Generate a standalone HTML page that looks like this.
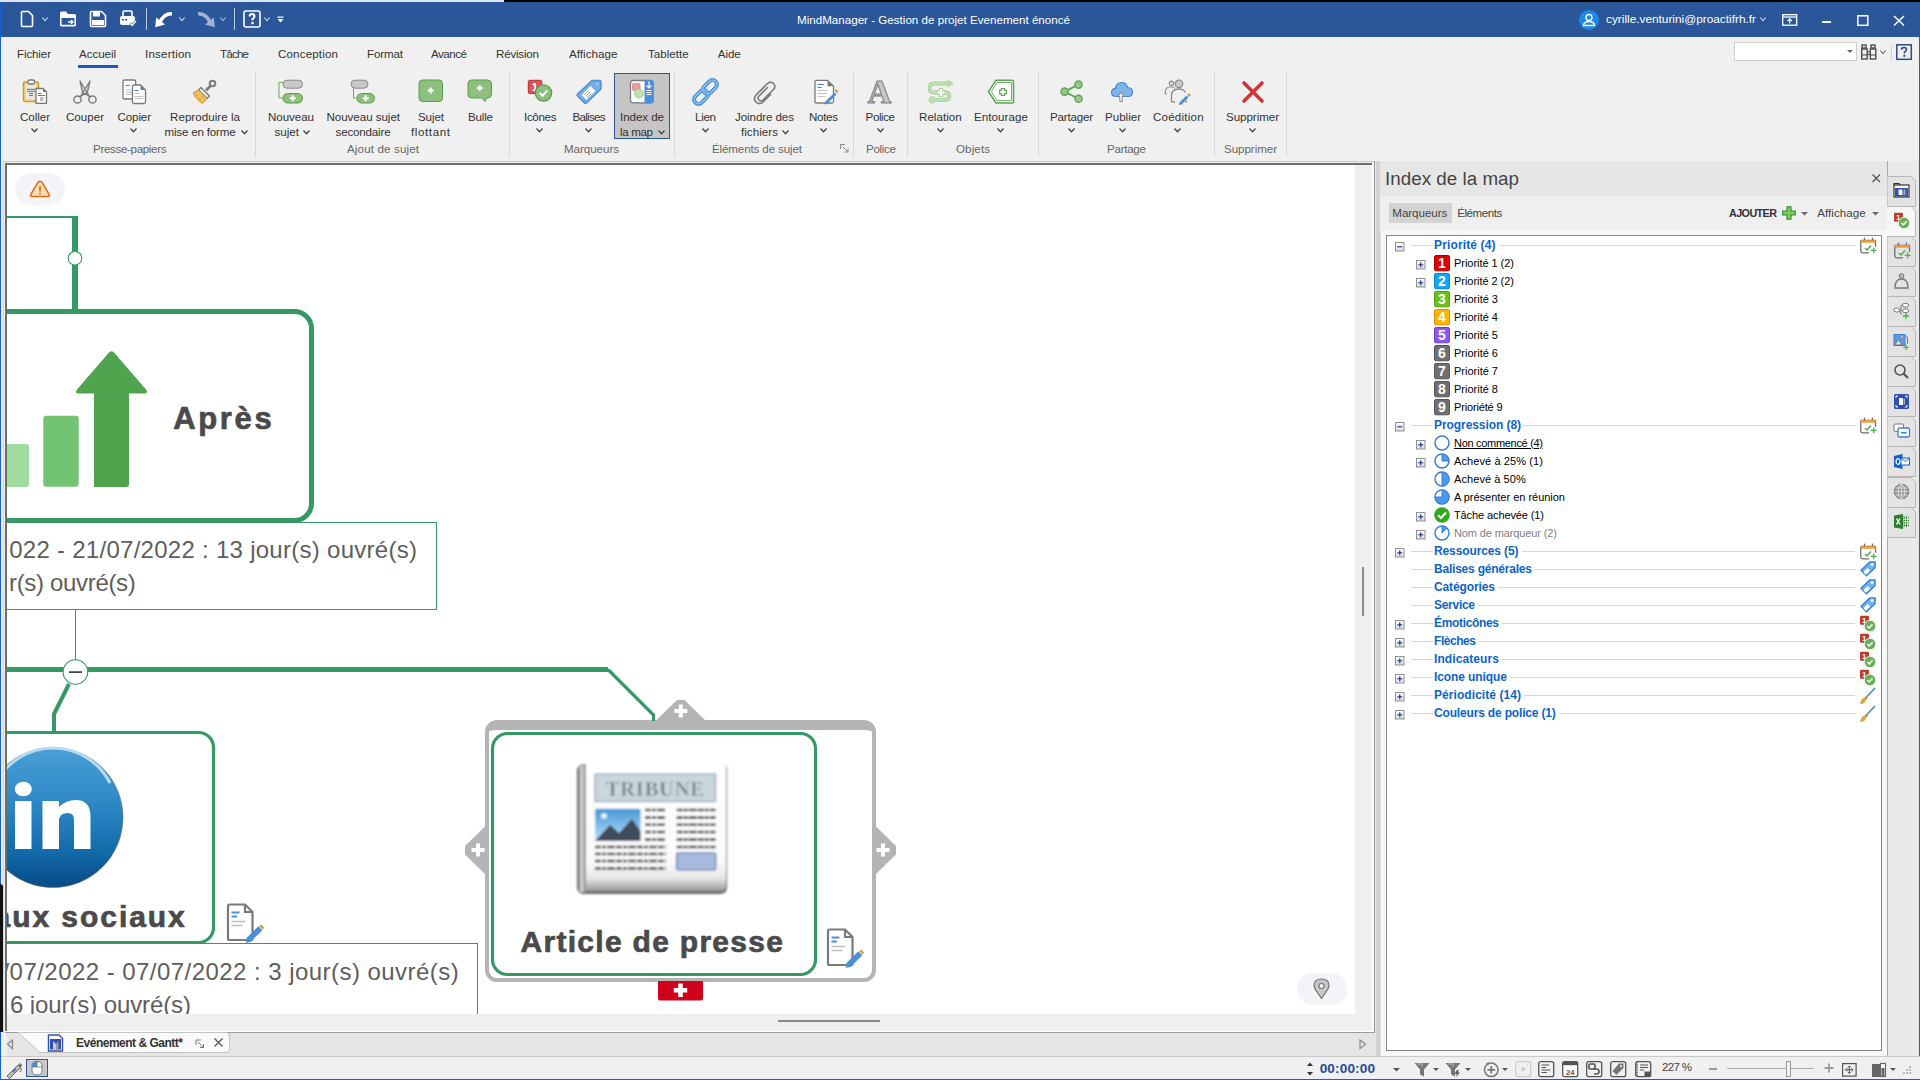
<!DOCTYPE html>
<html><head><meta charset="utf-8"><style>*{margin:0;padding:0;box-sizing:border-box}
html,body{width:1920px;height:1080px;overflow:hidden;background:#f0f0f0;font-family:"Liberation Sans",sans-serif;font-size:12px;color:#444;position:relative}
.a{position:absolute}
svg{position:absolute;overflow:visible}
.t{position:absolute;white-space:nowrap}
</style></head><body>
<div class="a" style="left:0px;top:0px;width:1920px;height:2px;background:#000;"></div>
<div class="a" style="left:0px;top:0px;width:504px;height:2px;background:#dbe5f5;"></div>
<div class="a" style="left:0px;top:2px;width:1920px;height:35px;background:#2b579a;"></div>
<div class="a" style="left:0px;top:2px;width:1px;height:1078px;background:#1a5fd0;"></div>
<div class="a" style="left:0px;top:884px;width:3px;height:148px;background:#111;border-radius:0 3px 0 0"></div>
<div class="a" style="left:1919px;top:37px;width:1px;height:1043px;background:#1a5fd0;"></div>
<svg style="left:20px;top:10px;" width="14" height="18" viewBox="0 0 14 18"><path d="M1.5 2.5 Q1.5 1.5 2.5 1.5 H8.5 L12.5 5.5 V15.5 Q12.5 16.5 11.5 16.5 H2.5 Q1.5 16.5 1.5 15.5 Z" fill="none" stroke="#fff" stroke-width="1.6"/></svg>
<svg style="left:42px;top:17px;" width="6" height="4" viewBox="0 0 6 4"><path d="M0.5 0.5 L3.0 3.8 L5.5 0.5" fill="none" stroke="#fff" stroke-width="1"/></svg>
<svg style="left:59px;top:10px;" width="18" height="18" viewBox="0 0 18 18"><path d="M1 3 Q1 1.5 2.5 1.5 H7 L9 4 H15.5 Q17 4 17 5.5 V15 Q17 16.5 15.5 16.5 H2.5 Q1 16.5 1 15 Z" fill="#fff"/><path d="M2.6 8 H15.4 V14.8 H2.6 Z" fill="#2b579a"/><path d="M9 12 H14 M12 10 L14 12 L12 14" stroke="#fff" stroke-width="1.4" fill="none"/></svg>
<svg style="left:89px;top:10px;" width="18" height="18" viewBox="0 0 18 18"><path d="M1.5 2.5 Q1.5 1.5 2.5 1.5 H12.5 L16.5 5.5 V15.5 Q16.5 16.5 15.5 16.5 H2.5 Q1.5 16.5 1.5 15.5 Z" fill="none" stroke="#fff" stroke-width="1.6"/><rect x="4" y="1.5" width="7" height="5" fill="#fff"/><rect x="3" y="10" width="12" height="5" fill="#fff"/></svg>
<svg style="left:119px;top:10px;" width="18" height="18" viewBox="0 0 18 18"><path d="M4 6 V2 Q4 1 5 1 H12 Q13 1 13 2 V6" fill="none" stroke="#fff" stroke-width="1.6"/><path d="M1 8 Q1 6 3 6 H14 Q16 6 16 8 V13 Q16 15 14 15 H3 Q1 15 1 13 Z" fill="#fff"/><rect x="3" y="9" width="2" height="1.5" fill="#2b579a"/><rect x="6" y="9" width="2" height="1.5" fill="#2b579a"/><path d="M11 13 L13 15.5 L17 11" stroke="#2b579a" stroke-width="2.6" fill="none"/><path d="M11 13 L13 15.5 L17 11" stroke="#fff" stroke-width="1.4" fill="none"/></svg>
<div class="a" style="left:146px;top:8px;width:1px;height:22px;background:#b9c7df;"></div>
<svg style="left:154px;top:11px;" width="20" height="17" viewBox="0 0 20 17"><path d="M18 2.8 Q9.5 2.5 6 11.5" fill="none" stroke="#fff" stroke-width="3.6"/><path d="M1.2 16.3 L2.2 6.5 L11 13.5 Z" fill="#fff"/></svg>
<svg style="left:179px;top:17px;" width="6" height="4" viewBox="0 0 6 4"><path d="M0.5 0.5 L3.0 3.8 L5.5 0.5" fill="none" stroke="#fff" stroke-width="1"/></svg>
<svg style="left:196px;top:11px;" width="20" height="17" viewBox="0 0 20 17"><path d="M2 2.8 Q10.5 2.5 14 11.5" fill="none" stroke="#9fb3d4" stroke-width="3.6"/><path d="M18.8 16.3 L17.8 6.5 L9 13.5 Z" fill="#9fb3d4"/></svg>
<svg style="left:220px;top:17px;" width="6" height="4" viewBox="0 0 6 4"><path d="M0.5 0.5 L3.0 3.8 L5.5 0.5" fill="none" stroke="#c9d4e6" stroke-width="1"/></svg>
<div class="a" style="left:234px;top:8px;width:1px;height:22px;background:#b9c7df;"></div>
<svg style="left:243px;top:10px;" width="18" height="18" viewBox="0 0 18 18"><rect x="1" y="1" width="16" height="16" rx="2" fill="none" stroke="#fff" stroke-width="1.6"/><path d="M6.5 6.5 Q6.5 4 9 4 Q11.5 4 11.5 6.3 Q11.5 8 9.5 9 V10.5" fill="none" stroke="#fff" stroke-width="2"/><rect x="8.3" y="12" width="2.4" height="2.2" fill="#fff"/></svg>
<svg style="left:264px;top:17px;" width="6" height="4" viewBox="0 0 6 4"><path d="M0.5 0.5 L3.0 3.8 L5.5 0.5" fill="none" stroke="#fff" stroke-width="1"/></svg>
<svg style="left:277px;top:16px;" width="8" height="8" viewBox="0 0 8 8"><rect x="0.5" y="0.5" width="6" height="1.2" fill="#fff"/><path d="M0.5 3 H6.5 L3.5 6.5 Z" fill="#fff"/></svg>
<div class="t" style="letter-spacing:0.008px;left:797px;top:14.14px;line-height:1;font-size:11.6px;font-weight:normal;color:#fff;font-family:'Liberation Sans',sans-serif;">MindManager - Gestion de projet Evenement énoncé</div>
<svg style="left:1579px;top:10px;" width="20" height="20" viewBox="0 0 20 20"><circle cx="10" cy="10" r="10" fill="#1e88e5"/><circle cx="10" cy="7.5" r="3" fill="none" stroke="#fff" stroke-width="1.3"/><path d="M4.5 15.5 Q5 11.5 10 11.5 Q15 11.5 15.5 15.5 Z" fill="none" stroke="#fff" stroke-width="1.3"/></svg>
<div class="t" style="letter-spacing:0.011px;left:1606px;top:13.97px;line-height:1;font-size:11.8px;font-weight:normal;color:#fff;font-family:'Liberation Sans',sans-serif;">cyrille.venturini@proactifrh.fr</div>
<svg style="left:1760px;top:17px;" width="6" height="4" viewBox="0 0 6 4"><path d="M0.5 0.5 L3.0 3.8 L5.5 0.5" fill="none" stroke="#fff" stroke-width="1"/></svg>
<svg style="left:1782px;top:14px;" width="16" height="12" viewBox="0 0 16 12"><rect x="0.7" y="0.7" width="14" height="10.5" fill="none" stroke="#fff" stroke-width="1.3"/><path d="M0.7 3 H14.7" stroke="#fff" stroke-width="1.3"/><path d="M7.7 9.5 V5 M5.5 7 L7.7 4.8 L9.9 7" stroke="#fff" stroke-width="1.2" fill="none"/></svg>
<div class="a" style="left:1822px;top:21px;width:9px;height:2px;background:#fff;"></div>
<svg style="left:1857px;top:15px;" width="12" height="11" viewBox="0 0 12 11"><rect x="0.8" y="0.8" width="10" height="9.5" fill="none" stroke="#fff" stroke-width="1.5"/></svg>
<svg style="left:1893px;top:15px;" width="12" height="11" viewBox="0 0 12 11"><path d="M1 1 L11 10.5 M11 1 L1 10.5" stroke="#fff" stroke-width="1.5"/></svg>
<div class="t" style="letter-spacing:-0.133px;left:17px;top:48.14px;line-height:1;font-size:11.6px;font-weight:normal;color:#333;font-family:'Liberation Sans',sans-serif;">Fichier</div>
<div class="t" style="letter-spacing:-0.062px;left:79px;top:48.14px;line-height:1;font-size:11.6px;font-weight:normal;color:#333;font-family:'Liberation Sans',sans-serif;">Accueil</div>
<div class="t" style="letter-spacing:0.191px;left:145px;top:48.14px;line-height:1;font-size:11.6px;font-weight:normal;color:#333;font-family:'Liberation Sans',sans-serif;">Insertion</div>
<div class="t" style="letter-spacing:-0.809px;left:220px;top:48.14px;line-height:1;font-size:11.6px;font-weight:normal;color:#333;font-family:'Liberation Sans',sans-serif;">Tâche</div>
<div class="t" style="letter-spacing:0.149px;left:278px;top:48.14px;line-height:1;font-size:11.6px;font-weight:normal;color:#333;font-family:'Liberation Sans',sans-serif;">Conception</div>
<div class="t" style="letter-spacing:-0.144px;left:367px;top:48.14px;line-height:1;font-size:11.6px;font-weight:normal;color:#333;font-family:'Liberation Sans',sans-serif;">Format</div>
<div class="t" style="letter-spacing:-0.494px;left:431px;top:48.14px;line-height:1;font-size:11.6px;font-weight:normal;color:#333;font-family:'Liberation Sans',sans-serif;">Avancé</div>
<div class="t" style="letter-spacing:-0.210px;left:496px;top:48.14px;line-height:1;font-size:11.6px;font-weight:normal;color:#333;font-family:'Liberation Sans',sans-serif;">Révision</div>
<div class="t" style="letter-spacing:0.045px;left:569px;top:48.14px;line-height:1;font-size:11.6px;font-weight:normal;color:#333;font-family:'Liberation Sans',sans-serif;">Affichage</div>
<div class="t" style="letter-spacing:-0.001px;left:648px;top:48.14px;line-height:1;font-size:11.6px;font-weight:normal;color:#333;font-family:'Liberation Sans',sans-serif;">Tablette</div>
<div class="t" style="letter-spacing:-0.106px;left:717.8px;top:48.14px;line-height:1;font-size:11.6px;font-weight:normal;color:#333;font-family:'Liberation Sans',sans-serif;">Aide</div>
<div class="a" style="left:78px;top:65px;width:40px;height:3px;background:#185abd;"></div>
<div class="a" style="left:1734px;top:42px;width:123px;height:19px;background:#fff;border:1px solid #cfcfcf"></div>
<svg style="left:1847px;top:50px;" width="6" height="3" viewBox="0 0 6 3"><path d="M0 0 H6 L3 3 Z" fill="#666"/></svg>
<svg style="left:1861px;top:44px;" width="17" height="16" viewBox="0 0 17 16"><rect x="1" y="1" width="4" height="3" fill="none" stroke="#444" stroke-width="1.3"/><rect x="10" y="1" width="4" height="3" fill="none" stroke="#444" stroke-width="1.3"/><rect x="0.7" y="5" width="5.5" height="10" fill="none" stroke="#444" stroke-width="1.3"/><rect x="9.3" y="5" width="5.5" height="10" fill="none" stroke="#444" stroke-width="1.3"/><path d="M6 8 H9.5 M6 10.5 H9.5" stroke="#444" stroke-width="1.2"/><path d="M0.7 11 H6 M9.3 11 H14.8" stroke="#444" stroke-width="1.2"/></svg>
<svg style="left:1880px;top:50px;" width="6" height="4" viewBox="0 0 6 4"><path d="M0.5 0.5 L3.0 3.8 L5.5 0.5" fill="none" stroke="#444" stroke-width="1"/></svg>
<div class="a" style="left:1891px;top:45px;width:1px;height:15px;background:#d0d0d0;"></div>
<svg style="left:1896px;top:44px;" width="16" height="16" viewBox="0 0 16 16"><rect x="0.8" y="0.8" width="14.5" height="14.5" fill="none" stroke="#2b4b8a" stroke-width="1.5"/><path d="M5.5 5.8 Q5.5 3.5 8 3.5 Q10.5 3.5 10.5 5.6 Q10.5 7.2 8.5 8 V9.5" fill="none" stroke="#2b4b8a" stroke-width="1.6"/><rect x="7.4" y="10.8" width="2" height="2" fill="#2b4b8a"/></svg>
<div class="a" style="left:255px;top:72px;width:1px;height:85px;background:#dadada;"></div>
<div class="a" style="left:509px;top:72px;width:1px;height:85px;background:#dadada;"></div>
<div class="a" style="left:674px;top:72px;width:1px;height:85px;background:#dadada;"></div>
<div class="a" style="left:853px;top:72px;width:1px;height:85px;background:#dadada;"></div>
<div class="a" style="left:907px;top:72px;width:1px;height:85px;background:#dadada;"></div>
<div class="a" style="left:1038px;top:72px;width:1px;height:85px;background:#dadada;"></div>
<div class="a" style="left:1214px;top:72px;width:1px;height:85px;background:#dadada;"></div>
<div class="a" style="left:1286px;top:72px;width:1px;height:85px;background:#dadada;"></div>
<div class="t" style="letter-spacing:-0.056px;left:20px;top:111.14px;line-height:1;font-size:11.6px;font-weight:normal;color:#333;font-family:'Liberation Sans',sans-serif;">Coller</div>
<svg style="left:31px;top:128px;" width="7" height="4" viewBox="0 0 7 4"><path d="M0.5 0.5 L3.5 3.8 L6.5 0.5" fill="none" stroke="#444" stroke-width="1.3"/></svg>
<div class="t" style="letter-spacing:-0.006px;left:66px;top:111.14px;line-height:1;font-size:11.6px;font-weight:normal;color:#333;font-family:'Liberation Sans',sans-serif;">Couper</div>
<div class="t" style="letter-spacing:-0.131px;left:117.5px;top:111.14px;line-height:1;font-size:11.6px;font-weight:normal;color:#333;font-family:'Liberation Sans',sans-serif;">Copier</div>
<svg style="left:130px;top:128px;" width="7" height="4" viewBox="0 0 7 4"><path d="M0.5 0.5 L3.5 3.8 L6.5 0.5" fill="none" stroke="#444" stroke-width="1.3"/></svg>
<div class="t" style="letter-spacing:0.033px;left:170px;top:111.14px;line-height:1;font-size:11.6px;font-weight:normal;color:#333;font-family:'Liberation Sans',sans-serif;">Reproduire la</div>
<div class="t" style="letter-spacing:-0.196px;left:164.5px;top:126.14px;line-height:1;font-size:11.6px;font-weight:normal;color:#333;font-family:'Liberation Sans',sans-serif;">mise en forme</div>
<svg style="left:240.5px;top:130px;" width="7" height="4" viewBox="0 0 7 4"><path d="M0.5 0.5 L3.5 3.8 L6.5 0.5" fill="none" stroke="#444" stroke-width="1.3"/></svg>
<div class="t" style="letter-spacing:-0.345px;left:93px;top:143.14px;line-height:1;font-size:11.6px;font-weight:normal;color:#666;font-family:'Liberation Sans',sans-serif;">Presse-papiers</div>
<div class="t" style="letter-spacing:-0.070px;left:268px;top:111.14px;line-height:1;font-size:11.6px;font-weight:normal;color:#333;font-family:'Liberation Sans',sans-serif;">Nouveau</div>
<div class="t" style="letter-spacing:-0.025px;left:274.6px;top:126.14px;line-height:1;font-size:11.6px;font-weight:normal;color:#333;font-family:'Liberation Sans',sans-serif;">sujet</div>
<svg style="left:302.5px;top:130px;" width="7" height="4" viewBox="0 0 7 4"><path d="M0.5 0.5 L3.5 3.8 L6.5 0.5" fill="none" stroke="#444" stroke-width="1.3"/></svg>
<div class="t" style="letter-spacing:-0.052px;left:326.5px;top:111.14px;line-height:1;font-size:11.6px;font-weight:normal;color:#333;font-family:'Liberation Sans',sans-serif;">Nouveau sujet</div>
<div class="t" style="letter-spacing:-0.191px;left:335.6px;top:126.14px;line-height:1;font-size:11.6px;font-weight:normal;color:#333;font-family:'Liberation Sans',sans-serif;">secondaire</div>
<div class="t" style="letter-spacing:-0.109px;left:418px;top:111.14px;line-height:1;font-size:11.6px;font-weight:normal;color:#333;font-family:'Liberation Sans',sans-serif;">Sujet</div>
<div class="t" style="letter-spacing:0.598px;left:411px;top:126.14px;line-height:1;font-size:11.6px;font-weight:normal;color:#333;font-family:'Liberation Sans',sans-serif;">flottant</div>
<div class="t" style="letter-spacing:-0.195px;left:468px;top:111.14px;line-height:1;font-size:11.6px;font-weight:normal;color:#333;font-family:'Liberation Sans',sans-serif;">Bulle</div>
<div class="t" style="letter-spacing:0.133px;left:347px;top:143.14px;line-height:1;font-size:11.6px;font-weight:normal;color:#666;font-family:'Liberation Sans',sans-serif;">Ajout de sujet</div>
<div class="t" style="letter-spacing:-0.334px;left:524px;top:111.14px;line-height:1;font-size:11.6px;font-weight:normal;color:#333;font-family:'Liberation Sans',sans-serif;">Icônes</div>
<svg style="left:536px;top:128px;" width="7" height="4" viewBox="0 0 7 4"><path d="M0.5 0.5 L3.5 3.8 L6.5 0.5" fill="none" stroke="#444" stroke-width="1.3"/></svg>
<div class="t" style="letter-spacing:-0.729px;left:572.5px;top:111.14px;line-height:1;font-size:11.6px;font-weight:normal;color:#333;font-family:'Liberation Sans',sans-serif;">Balises</div>
<svg style="left:585px;top:128px;" width="7" height="4" viewBox="0 0 7 4"><path d="M0.5 0.5 L3.5 3.8 L6.5 0.5" fill="none" stroke="#444" stroke-width="1.3"/></svg>
<div class="a" style="left:614px;top:73px;width:56px;height:66px;background:#c5c5c5;border:1px solid #2b579a"></div>
<div class="t" style="letter-spacing:-0.069px;left:620px;top:111.14px;line-height:1;font-size:11.6px;font-weight:normal;color:#333;font-family:'Liberation Sans',sans-serif;">Index de</div>
<div class="t" style="letter-spacing:-0.362px;left:620px;top:126.14px;line-height:1;font-size:11.6px;font-weight:normal;color:#333;font-family:'Liberation Sans',sans-serif;">la map</div>
<svg style="left:658px;top:130px;" width="7" height="4" viewBox="0 0 7 4"><path d="M0.5 0.5 L3.5 3.8 L6.5 0.5" fill="none" stroke="#444" stroke-width="1.3"/></svg>
<div class="t" style="letter-spacing:-0.053px;left:564px;top:143.14px;line-height:1;font-size:11.6px;font-weight:normal;color:#666;font-family:'Liberation Sans',sans-serif;">Marqueurs</div>
<div class="t" style="letter-spacing:-0.307px;left:695px;top:111.14px;line-height:1;font-size:11.6px;font-weight:normal;color:#333;font-family:'Liberation Sans',sans-serif;">Lien</div>
<svg style="left:702px;top:128px;" width="7" height="4" viewBox="0 0 7 4"><path d="M0.5 0.5 L3.5 3.8 L6.5 0.5" fill="none" stroke="#444" stroke-width="1.3"/></svg>
<div class="t" style="letter-spacing:-0.095px;left:735px;top:111.14px;line-height:1;font-size:11.6px;font-weight:normal;color:#333;font-family:'Liberation Sans',sans-serif;">Joindre des</div>
<div class="t" style="letter-spacing:0.038px;left:741px;top:126.14px;line-height:1;font-size:11.6px;font-weight:normal;color:#333;font-family:'Liberation Sans',sans-serif;">fichiers</div>
<svg style="left:782px;top:130px;" width="7" height="4" viewBox="0 0 7 4"><path d="M0.5 0.5 L3.5 3.8 L6.5 0.5" fill="none" stroke="#444" stroke-width="1.3"/></svg>
<div class="t" style="letter-spacing:-0.324px;left:809px;top:111.14px;line-height:1;font-size:11.6px;font-weight:normal;color:#333;font-family:'Liberation Sans',sans-serif;">Notes</div>
<svg style="left:820px;top:128px;" width="7" height="4" viewBox="0 0 7 4"><path d="M0.5 0.5 L3.5 3.8 L6.5 0.5" fill="none" stroke="#444" stroke-width="1.3"/></svg>
<div class="t" style="letter-spacing:-0.135px;left:712px;top:143.14px;line-height:1;font-size:11.6px;font-weight:normal;color:#666;font-family:'Liberation Sans',sans-serif;">Éléments de sujet</div>
<svg style="left:840px;top:144px;" width="9" height="9" viewBox="0 0 9 9"><path d="M0.5 0.5 H5 M0.5 0.5 V5" stroke="#888" stroke-width="1" fill="none"/><path d="M2.5 2.5 L8 8 M4.5 8 H8 V4.5" stroke="#888" stroke-width="1" fill="none"/></svg>
<div class="t" style="letter-spacing:-0.436px;left:865.6px;top:111.14px;line-height:1;font-size:11.6px;font-weight:normal;color:#333;font-family:'Liberation Sans',sans-serif;">Police</div>
<svg style="left:877px;top:128px;" width="7" height="4" viewBox="0 0 7 4"><path d="M0.5 0.5 L3.5 3.8 L6.5 0.5" fill="none" stroke="#444" stroke-width="1.3"/></svg>
<div class="t" style="letter-spacing:-0.316px;left:866px;top:143.14px;line-height:1;font-size:11.6px;font-weight:normal;color:#666;font-family:'Liberation Sans',sans-serif;">Police</div>
<div class="t" style="letter-spacing:0.022px;left:919px;top:111.14px;line-height:1;font-size:11.6px;font-weight:normal;color:#333;font-family:'Liberation Sans',sans-serif;">Relation</div>
<svg style="left:937px;top:128px;" width="7" height="4" viewBox="0 0 7 4"><path d="M0.5 0.5 L3.5 3.8 L6.5 0.5" fill="none" stroke="#444" stroke-width="1.3"/></svg>
<div class="t" style="letter-spacing:0.061px;left:974px;top:111.14px;line-height:1;font-size:11.6px;font-weight:normal;color:#333;font-family:'Liberation Sans',sans-serif;">Entourage</div>
<svg style="left:997px;top:128px;" width="7" height="4" viewBox="0 0 7 4"><path d="M0.5 0.5 L3.5 3.8 L6.5 0.5" fill="none" stroke="#444" stroke-width="1.3"/></svg>
<div class="t" style="letter-spacing:0.097px;left:956px;top:143.14px;line-height:1;font-size:11.6px;font-weight:normal;color:#666;font-family:'Liberation Sans',sans-serif;">Objets</div>
<div class="t" style="letter-spacing:-0.210px;left:1050px;top:111.14px;line-height:1;font-size:11.6px;font-weight:normal;color:#333;font-family:'Liberation Sans',sans-serif;">Partager</div>
<svg style="left:1068px;top:128px;" width="7" height="4" viewBox="0 0 7 4"><path d="M0.5 0.5 L3.5 3.8 L6.5 0.5" fill="none" stroke="#444" stroke-width="1.3"/></svg>
<div class="t" style="letter-spacing:-0.016px;left:1105px;top:111.14px;line-height:1;font-size:11.6px;font-weight:normal;color:#333;font-family:'Liberation Sans',sans-serif;">Publier</div>
<svg style="left:1119px;top:128px;" width="7" height="4" viewBox="0 0 7 4"><path d="M0.5 0.5 L3.5 3.8 L6.5 0.5" fill="none" stroke="#444" stroke-width="1.3"/></svg>
<div class="t" style="letter-spacing:0.200px;left:1153px;top:111.14px;line-height:1;font-size:11.6px;font-weight:normal;color:#333;font-family:'Liberation Sans',sans-serif;">Coédition</div>
<svg style="left:1174px;top:128px;" width="7" height="4" viewBox="0 0 7 4"><path d="M0.5 0.5 L3.5 3.8 L6.5 0.5" fill="none" stroke="#444" stroke-width="1.3"/></svg>
<div class="t" style="letter-spacing:-0.268px;left:1107px;top:143.14px;line-height:1;font-size:11.6px;font-weight:normal;color:#666;font-family:'Liberation Sans',sans-serif;">Partage</div>
<div class="t" style="letter-spacing:-0.061px;left:1226px;top:111.14px;line-height:1;font-size:11.6px;font-weight:normal;color:#333;font-family:'Liberation Sans',sans-serif;">Supprimer</div>
<svg style="left:1249px;top:128px;" width="7" height="4" viewBox="0 0 7 4"><path d="M0.5 0.5 L3.5 3.8 L6.5 0.5" fill="none" stroke="#444" stroke-width="1.3"/></svg>
<div class="t" style="letter-spacing:-0.061px;left:1224px;top:143.14px;line-height:1;font-size:11.6px;font-weight:normal;color:#666;font-family:'Liberation Sans',sans-serif;">Supprimer</div>
<svg style="left:22px;top:79px;" width="26" height="26" viewBox="0 0 26 26"><rect x="1.5" y="3" width="15" height="19.5" rx="2" fill="#f3d98f" stroke="#d59a2a" stroke-width="1.6"/><rect x="4" y="5.5" width="10" height="14.5" fill="#e8e8e8"/><rect x="6" y="1" width="6.5" height="4" rx="1.5" fill="#fff" stroke="#777" stroke-width="1.3"/><path d="M5 10.3 H13 M5 12.3 H13 M7 14.5 H11 M7 16.5 H11" stroke="#666" stroke-width="0.9"/><path d="M14 9.5 H21 L24.5 13 V24.3 H14 Z" fill="#fff" stroke="#777" stroke-width="1.3" stroke-linejoin="round"/><path d="M21 9.5 V13 H24.5 Z" fill="#777"/><path d="M16 14.5 H19.5" stroke="#3b82d6" stroke-width="1"/><path d="M16 16.5 H23 M18 19 H21.5 M18 21 H21.5" stroke="#666" stroke-width="0.9"/></svg>
<svg style="left:72px;top:79px;" width="26" height="26" viewBox="0 0 26 26"><circle cx="5.5" cy="20.5" r="3.6" fill="none" stroke="#7d7d7d" stroke-width="1.5"/><circle cx="20.5" cy="20.5" r="3.6" fill="none" stroke="#7d7d7d" stroke-width="1.5"/><path d="M8 18 L18 2 L15.5 13 Z M18 18 L8 2 L10.5 13 Z" fill="#d0d0d0" stroke="#7d7d7d" stroke-width="1.3" stroke-linejoin="round"/></svg>
<svg style="left:121px;top:79px;" width="26" height="26" viewBox="0 0 26 26"><path d="M2 2.5 Q2 1 3.5 1 H13 Q14.7 1 14.7 2.5 V18.5 Q14.7 20 13 20 H3.5 Q2 20 2 18.5 Z" fill="#fff" stroke="#7a7a7a" stroke-width="1.3"/><path d="M4.5 6.5 H8.5" stroke="#3b82d6" stroke-width="1"/><path d="M4.5 11 H12 M4.5 13.5 H12 M4.5 15.5 H12" stroke="#bbb" stroke-width="0.9"/><path d="M11.5 7.5 Q11.5 6 13 6 H19.5 L24.5 11 V23 Q24.5 24.5 23 24.5 H13 Q11.5 24.5 11.5 23 Z" fill="#fff" stroke="#7a7a7a" stroke-width="1.3"/><path d="M19.5 6 V11 H24.5 Z" fill="#7a7a7a"/><path d="M13.5 11.5 H17.5" stroke="#3b82d6" stroke-width="1"/><path d="M13.5 14.5 H19 M13.5 17.5 H22.5 M13.5 19.5 H22.5" stroke="#bbb" stroke-width="0.9"/></svg>
<svg style="left:192px;top:79px;" width="26" height="26" viewBox="0 0 26 26"><circle cx="20.5" cy="4.5" r="2.8" fill="none" stroke="#7d7d7d" stroke-width="2"/><path d="M18.8 6.5 L14 11.5" stroke="#7d7d7d" stroke-width="2.8"/><path d="M9 8.5 L17.5 17 L15 19.5 L6.5 11 Z" fill="#e6e6e6" stroke="#7d7d7d" stroke-width="1.3"/><path d="M6.5 11 L15 19.5 L10.5 24.5 Q6 22 3.5 18.5 Q1 15 1.5 13.5 Z" fill="#f0c060" stroke="#c8902a" stroke-width="0.9"/><path d="M4 15 L5.5 17.5 M7 19 L8.5 21.5 M9.5 16.5 L11 19" stroke="#c8902a" stroke-width="0.8"/></svg>
<svg style="left:278px;top:79px;" width="26" height="26" viewBox="0 0 26 26"><rect x="5" y="1.2" width="19.5" height="8" rx="4" fill="#c8c8c8" stroke="#8a8a8a" stroke-width="1"/><path d="M5 3.5 H1 V19 H5" fill="none" stroke="#6aaa5a" stroke-width="1"/><rect x="5" y="14.5" width="19.5" height="9.5" rx="4.5" fill="#8dc07e" stroke="#5aa04a" stroke-width="1"/><path d="M14.7 16.3 V22.3 M11.7 19.3 H17.7" stroke="#fff" stroke-width="2"/></svg>
<svg style="left:350px;top:79px;" width="26" height="26" viewBox="0 0 26 26"><rect x="1" y="1.2" width="17" height="8" rx="4" fill="#c8c8c8" stroke="#8a8a8a" stroke-width="1"/><path d="M3.5 9.5 V19 H7" fill="none" stroke="#6aaa5a" stroke-width="1"/><rect x="7" y="14.5" width="17.5" height="9.5" rx="4.5" fill="#8dc07e" stroke="#5aa04a" stroke-width="1"/><path d="M15.7 16.3 V22.3 M12.7 19.3 H18.7" stroke="#fff" stroke-width="2"/></svg>
<svg style="left:418px;top:79px;" width="26" height="26" viewBox="0 0 26 26"><rect x="1" y="1" width="23.5" height="21.5" rx="3.5" fill="#8dc07e" stroke="#5aa04a" stroke-width="1"/><path d="M12.7 8.5 V14.5 M9.7 11.5 H15.7" stroke="#fff" stroke-width="2"/></svg>
<svg style="left:467px;top:79px;" width="26" height="26" viewBox="0 0 26 26"><path d="M4.5 1 H20.5 Q24.5 1 24.5 5 V15.5 Q24.5 19 20.5 19 H19.5 L18 22.5 L14.5 19 H4.5 Q1 19 1 15.5 V5 Q1 1 4.5 1 Z" fill="#8dc07e" stroke="#5aa04a" stroke-width="1"/><path d="M12.7 6 V12 M9.7 9 H15.7" stroke="#fff" stroke-width="2"/></svg>
<svg style="left:527px;top:79px;" width="26" height="26" viewBox="0 0 26 26"><rect x="1.3" y="1.3" width="13.5" height="13.3" rx="1.5" fill="#d85353" stroke="#b72c2c" stroke-width="1"/><text x="7.8" y="12" text-anchor="middle" font-family="Liberation Sans" font-weight="bold" font-size="11" fill="#fff">1</text><circle cx="16.5" cy="14" r="8.2" fill="#8cc07c" stroke="#5aa04a" stroke-width="1.3"/><path d="M12.8 14 L15.5 16.8 L20.3 11.3" stroke="#fff" stroke-width="2" fill="none"/></svg>
<svg style="left:576px;top:79px;" width="26" height="26" viewBox="0 0 26 26"><path d="M16 1.5 L23.5 1.5 Q25 1.5 25 3 L25 10 L10.5 24 Q9.5 25 8.5 24 L1.5 17 Q0.5 16 1.5 15 Z" fill="#74aee8" stroke="#4a8fd8" stroke-width="1.4" stroke-linejoin="round"/><circle cx="21.2" cy="5" r="1.4" fill="#fff" stroke="#4a8fd8" stroke-width="0.8"/><path d="M5.5 16 L14.5 7 L19.5 12 L10.5 21 Z" fill="#fff"/><path d="M8 16 L13 11 M9.5 17.5 L14 13 M11 19 L15.5 14.5" stroke="#999" stroke-width="0.8"/></svg>
<svg style="left:629px;top:79px;" width="26" height="26" viewBox="0 0 26 26"><rect x="1.5" y="1.5" width="22.5" height="22.3" rx="2.5" fill="#fff" stroke="#7a7a7a" stroke-width="1.3"/><path d="M15.5 1 H22.5 Q24.5 1 24.5 3 V22.5 Q24.5 24.5 22.5 24.5 H15.5 Z" fill="#4d8fd6"/><path d="M20 2.5 V9 M17.5 6.5 L20 9 L22.5 6.5 M17.5 11.5 H22.5 M17.5 13.5 H22.5 M17.5 15.5 H22.5" stroke="#fff" stroke-width="1.1" fill="none"/><rect x="3.5" y="4.5" width="7.5" height="7" rx="1" fill="#e6a0a0" stroke="#d77" stroke-width="0.8"/><circle cx="10" cy="14.5" r="4.5" fill="#bfdfb0" stroke="#9ccc8a" stroke-width="0.8"/></svg>
<svg style="left:692px;top:79px;" width="26" height="27" viewBox="0 0 26 27"><g fill="none" stroke="#4a90d9" stroke-width="4"><rect x="10" y="3.5" width="16" height="9" rx="4.5" transform="rotate(-45 18 8)"/><rect x="1" y="13.5" width="16" height="9" rx="4.5" transform="rotate(-45 9 18)"/></g><g fill="none" stroke="#9ccaf2" stroke-width="1.2"><rect x="10" y="3.5" width="16" height="9" rx="4.5" transform="rotate(-45 18 8)"/><rect x="1" y="13.5" width="16" height="9" rx="4.5" transform="rotate(-45 9 18)"/></g></svg>
<svg style="left:752px;top:79px;" width="26" height="26" viewBox="0 0 26 26"><path d="M15.5 8.5 L7 17 Q5 19 7 21 Q9 23 11 21 L21 11 Q24.5 7.5 21.5 4.5 Q18.5 1.5 15 5 L4.5 15.5 Q0.5 19.5 4 23 Q7.5 26.5 11.5 22.5 L18.5 15.5" fill="none" stroke="#7a7a7a" stroke-width="1.6" stroke-linecap="round"/></svg>
<svg style="left:813px;top:79px;" width="26" height="26" viewBox="0 0 26 26"><path d="M3.5 1.3 H14.5 L20.5 7.3 V22.5 Q20.5 24 19 24 H3.5 Q2 24 2 22.5 V2.8 Q2 1.3 3.5 1.3 Z" fill="#fff" stroke="#7a7a7a" stroke-width="1.3"/><path d="M14.5 1.3 V7.3 H20.5 Z" fill="#7a7a7a"/><path d="M4.5 5.5 H11 M4.5 8.5 H8.5" stroke="#3b82d6" stroke-width="1"/><path d="M4.5 11.5 H14 M4.5 14.5 H14 M4.5 17.5 H12" stroke="#bbb" stroke-width="0.9"/><path d="M12 23 L21.5 13.5 L23.5 15.5 L14 25 L11.5 25.5 Z" fill="#4a90d9"/><path d="M21.5 11.5 L23 10 L25.5 12.5 L24 14 Z" fill="#d89a3a"/></svg>
<svg style="left:866px;top:77px;" width="28" height="28" viewBox="0 0 28 28"><text x="13.5" y="26" text-anchor="middle" font-family="Liberation Serif" font-weight="bold" font-size="33" fill="#c8c8c8" stroke="#808080" stroke-width="1.1">A</text></svg>
<svg style="left:925px;top:79px;" width="32" height="26" viewBox="0 0 32 26"><path d="M23.5 4.5 H9 Q4.5 4.5 4.5 9 Q4.5 13.5 9 13.5 H20.5 Q24.3 13.5 24.3 17.2 Q24.3 20.8 20.5 20.8 H8" fill="none" stroke="#a9d19a" stroke-width="3.8"/><path d="M23.5 4.5 H9 Q4.5 4.5 4.5 9 Q4.5 13.5 9 13.5 H20.5 Q24.3 13.5 24.3 17.2 Q24.3 20.8 20.5 20.8 H8" fill="none" stroke="#c9e3bd" stroke-width="1.6"/><path d="M22.5 0.3 L29 4.5 L22.5 8.7 Z" fill="#b5d8a6"/><circle cx="7.2" cy="20.8" r="3.8" fill="#bcdcae"/><path d="M14.3 9.5 H17.7 V11.8 H20 V15.2 H17.7 V17.5 H14.3 V15.2 H12 V11.8 H14.3 Z" fill="#fff" stroke="#a9d19a" stroke-width="1.1"/></svg>
<svg style="left:987px;top:79px;" width="28" height="26" viewBox="0 0 28 26"><path d="M9 1.2 H25 Q26.5 1.2 26.5 2.7 V22.5 Q26.5 24 25 24 H9 L1.5 12.6 Z" fill="#fff" stroke="#5aa852" stroke-width="1.6" stroke-linejoin="round"/><path d="M10 3.5 H24.5 V21.7 H10 L4.3 12.6 Z" fill="none" stroke="#5aa852" stroke-width="0.9"/><path d="M16 9 V17 M12 13 H20" stroke="#5aa852" stroke-width="4.5"/><path d="M16 10.2 V15.8 M13.2 13 H18.8" stroke="#fff" stroke-width="2.2"/></svg>
<svg style="left:1058px;top:79px;" width="26" height="26" viewBox="0 0 26 26"><path d="M6.5 12.6 L20.5 5.6 M6.5 12.6 L20.5 19.8" stroke="#5aa852" stroke-width="1.8"/><circle cx="6.5" cy="12.6" r="3.6" fill="#9cc78a" stroke="#5aa852" stroke-width="1.4"/><circle cx="20.5" cy="5.6" r="3.6" fill="#9cc78a" stroke="#5aa852" stroke-width="1.4"/><circle cx="20.5" cy="19.8" r="3.6" fill="#9cc78a" stroke="#5aa852" stroke-width="1.4"/></svg>
<svg style="left:1110px;top:79px;" width="26" height="26" viewBox="0 0 26 26"><path d="M6 17.5 Q1.5 17.5 1.5 13.5 Q1.5 9.8 5.3 9.3 Q6.3 3.5 11.5 3.5 Q16.3 3.5 17.6 8.5 Q22.5 8.8 22.5 13.2 Q22.5 17.5 18 17.5 Z" fill="#7db5e8" stroke="#4a8ad0" stroke-width="1.2"/><path d="M9.8 22.5 V17.3 H8 L11 13.6 L14 17.3 H12.2 V22.5 Z" fill="#fff" stroke="#777" stroke-width="0.9"/></svg>
<svg style="left:1164px;top:79px;" width="30" height="26" viewBox="0 0 30 26"><circle cx="7.5" cy="4.3" r="2.2" fill="#ddd" stroke="#8a8a8a" stroke-width="1.1"/><path d="M1.3 15 V13 Q1.3 8 7 7.8 Q9.5 7.8 10.8 9.3" fill="none" stroke="#8a8a8a" stroke-width="1.1"/><path d="M1.3 15 H3" stroke="#8a8a8a" stroke-width="1.1"/><circle cx="15" cy="4.8" r="3.8" fill="#c8c8c8" stroke="#8a8a8a" stroke-width="1.2"/><path d="M7.5 23 V17 Q7.5 10 15 10 Q19.5 10 21.5 13.5" fill="none" stroke="#8a8a8a" stroke-width="1.3"/><path d="M7.5 23 H11" stroke="#8a8a8a" stroke-width="1.3"/><path d="M21 23 H22.5 V21.5" fill="none" stroke="#8a8a8a" stroke-width="1.2"/><path d="M15.5 23.5 L22.5 16.5 L24.5 18.5 L17.5 25.5 L15 26 Z" fill="#4a90d9"/><path d="M23.3 15.7 L24.8 14.2 L26.8 16.2 L25.3 17.7 Z" fill="#c8902a"/></svg>
<svg style="left:1242px;top:81px;" width="22" height="22" viewBox="0 0 22 22"><path d="M2 2 L20 20 M20 2 L2 20" stroke="#d13438" stroke-width="3.6" stroke-linecap="round"/></svg>
<div class="a" style="left:3px;top:161px;width:1372px;height:1px;background:#c9c9c9;"></div>
<div class="a" style="left:3px;top:161px;width:1px;height:872px;background:#d5d5d5;"></div>
<div class="a" style="left:5px;top:163px;width:1368px;height:2px;background:#6e6e6e;"></div>
<div class="a" style="left:5px;top:163px;width:2px;height:869px;background:#6e6e6e;"></div>
<div class="a" style="left:7px;top:165px;width:1366px;height:867px;background:#efefef;"></div>
<div class="a" style="left:1372px;top:163px;width:1px;height:870px;background:#ffffff;"></div>
<div class="a" style="left:1374px;top:161px;width:1px;height:872px;background:#9a9a9a;"></div>
<div class="a" style="left:5px;top:1031px;width:1368px;height:1px;background:#ffffff;"></div>
<div class="a" style="left:5px;top:1032px;width:1370px;height:1px;background:#9a9a9a;"></div>
<div class="a" style="left:7px;top:165px;width:1348px;height:849px;overflow:hidden;background:#fff"><div class="a" style="left:-7px;top:-165px;width:1920px;height:1080px">
<div class="a" style="left:15px;top:173px;width:50px;height:32px;background:#f4f4f8;border-radius:16px"></div>
<svg style="left:29px;top:180px;" width="22" height="18" viewBox="0 0 22 18"><path d="M11 1.8 Q12 1 13 2.2 L20.2 14.5 Q21 16.5 19 16.5 H3 Q1 16.5 1.8 14.5 L9 2.2 Q10 1 11 1.8 Z" fill="#f7dcc0" stroke="#e07010" stroke-width="1.5" stroke-linejoin="round"/><rect x="10.1" y="6" width="1.8" height="5.5" fill="#e07010"/><rect x="10.1" y="12.8" width="1.8" height="1.8" fill="#e07010"/></svg>
<div class="a" style="left:0px;top:216px;width:78px;height:2px;background:#359966;"></div>
<div class="a" style="left:72px;top:217px;width:6px;height:95px;background:#359966;"></div>
<svg style="left:67px;top:250px;" width="16" height="16" viewBox="0 0 16 16"><circle cx="8" cy="8.3" r="6.8" fill="#fff" stroke="#359966" stroke-width="1.1"/></svg>
<svg style="left:-40px;top:309px;" width="355" height="214" viewBox="0 0 355 214"><rect x="2.5" y="2.5" width="349" height="209" rx="17" fill="#fff" stroke="#359966" stroke-width="5"/></svg>
<svg style="left:0px;top:350px;" width="150" height="140" viewBox="0 0 150 140"><rect x="-10" y="94" width="39" height="43" rx="3" fill="#9fdb9c"/><rect x="43.3" y="65.8" width="35.4" height="71" rx="3" fill="#72c472"/><path d="M94 136.7 Q94 137 97 137 H126 Q129 137 129 134 V43.5 H144 Q149 43.5 146 39.5 L114 2.5 Q111.5 0 109 2.5 L77 39.5 Q74 43.5 79 43.5 H94 Z" fill="#50a44e"/></svg>
<div class="t" style="letter-spacing:2.656px;left:173.2px;top:402.55px;line-height:1;font-size:31px;font-weight:bold;color:#4a4a4a;font-family:'Liberation Sans',sans-serif;-webkit-text-stroke:0.7px #4a4a4a;">Après</div>
<div class="a" style="left:0px;top:522px;width:437px;height:88px;background:none;border:1px solid #359966"></div>
<div class="t" style="letter-spacing:0.277px;left:9.2px;top:538.20px;line-height:1;font-size:24px;font-weight:normal;color:#5e5e5e;font-family:'Liberation Sans',sans-serif;">022 - 21/07/2022 : 13 jour(s) ouvré(s)</div>
<div class="t" style="letter-spacing:-0.323px;left:9px;top:571.10px;line-height:1;font-size:24px;font-weight:normal;color:#5e5e5e;font-family:'Liberation Sans',sans-serif;">r(s) ouvré(s)</div>
<div class="a" style="left:75px;top:610px;width:1px;height:50px;background:#359966;"></div>
<div class="a" style="left:0px;top:667px;width:608px;height:5px;background:#359966;"></div>
<svg style="left:603px;top:666px;" width="60" height="55" viewBox="0 0 60 55"><path d="M5 3.5 L50.5 49 V54" fill="none" stroke="#359966" stroke-width="3.2"/></svg>
<svg style="left:62px;top:659px;" width="28" height="28" viewBox="0 0 28 28"><circle cx="13.4" cy="13" r="12.3" fill="#fff" stroke="#359966" stroke-width="1.1"/><rect x="7" y="12.3" width="13" height="1.6" fill="#333"/></svg>
<svg style="left:45px;top:680px;" width="30" height="56" viewBox="0 0 30 56"><path d="M24 4 L9 34 V55" fill="none" stroke="#359966" stroke-width="4"/></svg>
<svg style="left:-40px;top:731px;" width="256" height="213" viewBox="0 0 256 213"><rect x="1.5" y="1.5" width="252" height="210" rx="15" fill="#fff" stroke="#359966" stroke-width="3.2"/></svg>
<svg style="left:-20px;top:745px;" width="146" height="146" viewBox="0 0 146 146"><defs><linearGradient id="lg" x1="0" y1="0" x2="0" y2="1"><stop offset="0" stop-color="#4aa0d6"/><stop offset="0.45" stop-color="#2b84c2"/><stop offset="0.75" stop-color="#136aa8"/><stop offset="1" stop-color="#074a86"/></linearGradient></defs><circle cx="73" cy="72.5" r="70" fill="url(#lg)" stroke="#6a6a6a" stroke-width="1" stroke-opacity="0.6"/><path d="M16 38 A64 64 0 0 1 130 38" fill="none" stroke="#bfe3f8" stroke-width="3" opacity="0.9"/><rect x="35" y="56" width="16.5" height="48" fill="#fff"/><ellipse cx="43.3" cy="44" rx="8.5" ry="7.3" fill="#fff"/><path d="M62.5 104 V56 H79 V62 Q86 55 96 55 Q110.5 55 110.5 72 V104 H94 V75 Q94 68 88 68 Q79 68 79 76 V104 Z" fill="#fff"/></svg>
<div class="t" style="left:-86px;top:901.80px;line-height:1;font-size:30px;font-weight:bold;color:#4a4a4a;font-family:'Liberation Sans',sans-serif;letter-spacing:1.95px;-webkit-text-stroke:0.7px #4a4a4a;">Réseaux sociaux</div>
<svg style="left:226px;top:903px;" width="36" height="40" viewBox="0 0 36 40"><path d="M2 3 Q2 1.5 3.5 1.5 H19 L26.5 9 V35.5 Q26.5 37 25 37 H3.5 Q2 37 2 35.5 Z" fill="#fff" stroke="#7a7a7a" stroke-width="2.2"/><path d="M19 1.5 V9 H26.5" fill="none" stroke="#7a7a7a" stroke-width="2.2"/><path d="M5.5 9.5 H13.5 M5.5 13.5 H11" stroke="#4a8fd8" stroke-width="1.8"/><path d="M5.5 18.5 H19 M5.5 22.5 H16.5" stroke="#bdbdbd" stroke-width="1.5"/><path d="M20.5 35 L32.3 23.2 L36.3 27.2 L24.5 39 L19.8 39.8 Z" fill="#4a8fd8"/><path d="M33.3 23.2 L35 21.5 L38.3 24.8 L36.6 26.5 Z" fill="#d89a3a"/></svg>
<div class="a" style="left:0px;top:943px;width:478px;height:90px;background:none;border:1px solid #359966"></div>
<div class="t" style="letter-spacing:0.454px;left:2.5px;top:959.90px;line-height:1;font-size:24px;font-weight:normal;color:#5e5e5e;font-family:'Liberation Sans',sans-serif;">/07/2022 - 07/07/2022 : 3 jour(s) ouvré(s)</div>
<div class="t" style="letter-spacing:-0.101px;left:10px;top:992.60px;line-height:1;font-size:24px;font-weight:normal;color:#5e5e5e;font-family:'Liberation Sans',sans-serif;">6 jour(s) ouvré(s)</div>
<div class="a" style="left:485px;top:719.7px;width:390.5px;height:262px;background:#fff;border-style:solid;border-color:#b4b4b4;border-width:10.5px 4.5px 4.5px 4.5px;border-radius:12px"></div>
<svg style="left:655px;top:699px;" width="52" height="22" viewBox="0 0 52 22"><path d="M1 21.5 L22 1 H29.6 L50.5 21.5 Z" fill="#b4b4b4"/><path d="M25.8 5.5 V18.5 M19.3 12 H32.3" stroke="#fff" stroke-width="4"/></svg>
<svg style="left:464px;top:825px;" width="22" height="50" viewBox="0 0 22 50"><path d="M21.5 1 L1 21 V29.6 L21.5 49.5 Z" fill="#b4b4b4"/><path d="M14 18.5 V31.5 M7.5 25 H20.5" stroke="#fff" stroke-width="4"/></svg>
<svg style="left:875px;top:825px;" width="22" height="50" viewBox="0 0 22 50"><path d="M0.5 1 L21 21 V29.6 L0.5 49.5 Z" fill="#b4b4b4"/><path d="M8 18.5 V31.5 M1.5 25 H14.5" stroke="#fff" stroke-width="4"/></svg>
<svg style="left:658px;top:981px;" width="45" height="20" viewBox="0 0 45 20"><path d="M0 0 H45 V17.5 Q45 19.5 43 19.5 H2 Q0 19.5 0 17.5 Z" fill="#d0021b"/><path d="M22.5 2.5 V16 M15.8 9.3 H29.2" stroke="#fff" stroke-width="4.6"/></svg>
<div class="a" style="left:651.7px;top:715px;width:3.6px;height:6px;background:#359966;"></div>
<svg style="left:490px;top:731px;" width="328" height="246" viewBox="0 0 328 246"><rect x="2.5" y="2.5" width="323" height="241" rx="15" fill="#fff" stroke="#359966" stroke-width="3.2"/></svg>
<svg style="left:826px;top:927.5px;" width="36" height="40" viewBox="0 0 36 40"><path d="M2 3 Q2 1.5 3.5 1.5 H19 L26.5 9 V35.5 Q26.5 37 25 37 H3.5 Q2 37 2 35.5 Z" fill="#fff" stroke="#7a7a7a" stroke-width="2.2"/><path d="M19 1.5 V9 H26.5" fill="none" stroke="#7a7a7a" stroke-width="2.2"/><path d="M5.5 9.5 H13.5 M5.5 13.5 H11" stroke="#4a8fd8" stroke-width="1.8"/><path d="M5.5 18.5 H19 M5.5 22.5 H16.5" stroke="#bdbdbd" stroke-width="1.5"/><path d="M20.5 35 L32.3 23.2 L36.3 27.2 L24.5 39 L19.8 39.8 Z" fill="#4a8fd8"/><path d="M33.3 23.2 L35 21.5 L38.3 24.8 L36.6 26.5 Z" fill="#d89a3a"/></svg>
<div class="t" style="letter-spacing:1.294px;left:520.5px;top:927.20px;line-height:1;font-size:30px;font-weight:bold;color:#4a4a4a;font-family:'Liberation Sans',sans-serif;-webkit-text-stroke:0.7px #4a4a4a;">Article de presse</div>
<svg style="left:570px;top:755px;" width="165" height="145" viewBox="0 0 165 145"><defs><linearGradient id="np" x1="0" y1="0" x2="0" y2="1"><stop offset="0" stop-color="#ffffff"/><stop offset="0.78" stop-color="#fafafa"/><stop offset="0.9" stop-color="#e6e6e6"/><stop offset="1" stop-color="#9a9a9a"/></linearGradient><linearGradient id="sp" x1="0" y1="0" x2="1" y2="0"><stop offset="0" stop-color="#555"/><stop offset="0.5" stop-color="#d8d8d8"/><stop offset="1" stop-color="#888"/></linearGradient><linearGradient id="sky" x1="0" y1="0" x2="0" y2="1"><stop offset="0" stop-color="#4596d8"/><stop offset="1" stop-color="#bde0f7"/></linearGradient><filter id="bl" x="-5%" y="-5%" width="110%" height="110%"><feGaussianBlur stdDeviation="0.9"/></filter></defs><g filter="url(#bl)"><path d="M13 9 Q8 10 7 15 V132 Q7 138 13 139 H150 Q157 139 157 132 V14 Q157 8 151 8 Z" fill="#6a6a6a"/><path d="M7 15 Q9 10 16 9 V137 H12 Q7 137 7 132 Z" fill="url(#sp)"/><path d="M16 8 H152 Q156 8 156 12 V130 Q156 136 150 136 H16 Z" fill="url(#np)"/><rect x="25" y="19" width="120.5" height="27.5" fill="#c9d6dc" stroke="#9fb1b9" stroke-width="1.5"/><text x="85.3" y="40.5" text-anchor="middle" font-family="Liberation Serif" font-size="20.5" font-weight="bold" fill="#6a767c" stroke="#c9d6dc" stroke-width="0.6" letter-spacing="0.8">TRIBUNE</text><rect x="25" y="53.7" width="45.5" height="32.3" rx="1.5" fill="url(#sky)"/><path d="M25 86 L40 70 L49 78 L62 64 L70.5 76 V86 Z" fill="#3f4b5b"/><circle cx="34" cy="61" r="2.8" fill="#fff" opacity="0.9"/><g stroke="#3a3a3a" stroke-width="2.6" stroke-dasharray="6 1 4 1 8 1"><path d="M75 55 H96 M75 62.6 H96 M75 69.8 H96 M75 77 H96 M75 84.6 H96 M25 92 H96 M25 99 H96 M25 106 H96 M25 113.5 H96 M106.7 55 H145.6 M106.7 62.6 H145.6 M106.7 69.8 H145.6 M106.7 77 H145.6 M106.7 84.6 H145.6 M106.7 92 H145.6"/></g><rect x="106.7" y="98" width="38.9" height="16.8" rx="1.5" fill="#a9bbdf" stroke="#6d84b4" stroke-width="1.6"/></g></svg>
<div class="a" style="left:1296.5px;top:973.3px;width:50px;height:31.4px;background:#f4f4f8;border-radius:15.7px"></div>
<svg style="left:1313px;top:978px;" width="18" height="22" viewBox="0 0 18 22"><path d="M8.5 20.5 L3 12.5 Q1 9.5 1 7.5 Q1 1 8.5 1 Q16 1 16 7.5 Q16 9.5 14 12.5 Z" fill="#c6c6c6" stroke="#6e6e6e" stroke-width="1.2" stroke-linejoin="round"/><circle cx="8.5" cy="8" r="2.5" fill="#fff" stroke="#6e6e6e" stroke-width="1.1"/></svg>
</div></div>
<div class="a" style="left:1362px;top:567px;width:2px;height:49px;background:#8a8a8a;"></div>
<div class="a" style="left:778px;top:1020px;width:102px;height:2px;background:#8a8a8a;"></div>
<div class="a" style="left:1375px;top:161px;width:512px;height:895px;background:#f8f7f5;"></div>
<div class="a" style="left:1375px;top:161px;width:1px;height:895px;background:#e6e6e6;"></div>
<div class="a" style="left:1376px;top:161px;width:4px;height:895px;background:#d3d3d3;"></div>
<div class="a" style="left:1380px;top:161px;width:1px;height:895px;background:#e2e2e2;"></div>
<div class="a" style="left:1380px;top:161px;width:507px;height:35px;background:#e6e6e6;"></div>
<div class="a" style="left:1380px;top:196px;width:507px;height:34px;background:#efefef;"></div>
<div class="t" style="letter-spacing:0.025px;left:1385px;top:169.82px;line-height:1;font-size:18.8px;font-weight:normal;color:#444;font-family:'Liberation Sans',sans-serif;">Index de la map</div>
<svg style="left:1871px;top:173px;" width="10" height="10" viewBox="0 0 10 10"><path d="M1.5 1.5 L9 9 M9 1.5 L1.5 9" stroke="#555" stroke-width="1.3"/></svg>
<div class="a" style="left:1389px;top:203px;width:63px;height:20px;background:#d3d3d3;"></div>
<div class="t" style="letter-spacing:-0.053px;left:1392.3px;top:207.14px;line-height:1;font-size:11.6px;font-weight:normal;color:#444;font-family:'Liberation Sans',sans-serif;">Marqueurs</div>
<div class="t" style="letter-spacing:-0.475px;left:1457.2px;top:207.14px;line-height:1;font-size:11.6px;font-weight:normal;color:#444;font-family:'Liberation Sans',sans-serif;">Éléments</div>
<div class="t" style="letter-spacing:-0.599px;left:1729px;top:207.82px;line-height:1;font-size:10.8px;font-weight:bold;color:#333;font-family:'Liberation Sans',sans-serif;">AJOUTER</div>
<svg style="left:1782px;top:206px;" width="14" height="14" viewBox="0 0 14 14"><path d="M5 0.7 H9 V5 H13.3 V9 H9 V13.3 H5 V9 H0.7 V5 H5 Z" fill="#7ccc5c" stroke="#2e8b2e" stroke-width="1.1"/></svg>
<svg style="left:1801px;top:212px;" width="7" height="4" viewBox="0 0 7 4"><path d="M0 0 H7 L3.5 3.5 Z" fill="#666"/></svg>
<div class="t" style="letter-spacing:0.032px;left:1817.3px;top:207.14px;line-height:1;font-size:11.6px;font-weight:normal;color:#444;font-family:'Liberation Sans',sans-serif;">Affichage</div>
<svg style="left:1872px;top:212px;" width="7" height="4" viewBox="0 0 7 4"><path d="M0 0 H7 L3.5 3.5 Z" fill="#666"/></svg>
<div class="a" style="left:1386px;top:235px;width:496px;height:816px;background:#fff;border:1px solid #858585"></div>
<svg width="0" height="0" style="position:absolute"><defs><linearGradient id="bxg" x1="0" y1="0" x2="0" y2="1"><stop offset="0" stop-color="#fff"/><stop offset="1" stop-color="#dcdcdc"/></linearGradient></defs></svg>
<svg style="left:1395px;top:241.5px;" width="10" height="10" viewBox="0 0 10 10"><rect x="0.5" y="0.5" width="8.5" height="8.5" fill="url(#bxg)" stroke="#8f8f8f" stroke-width="1"/><path d="M2.3 4.75 H7.2" stroke="#2b3f8f" stroke-width="1.2"/></svg>
<div class="a" style="left:1411px;top:245px;width:22px;height:1px;background:#d6d6d6;"></div>
<div class="a" style="left:1498.5px;top:245px;width:356.5px;height:1px;background:#d6d6d6;"></div>
<div class="t" style="letter-spacing:0.135px;left:1434px;top:238.80px;line-height:1;font-size:12px;font-weight:bold;color:#0b64c8;font-family:'Liberation Sans',sans-serif;">Priorité (4)</div>
<svg style="left:1859px;top:236.7px;" width="18" height="18" viewBox="0 0 18 18"><path d="M1.8 3.5 H16.5 V9.8" fill="none" stroke="#6e6e6e" stroke-width="1.3"/><path d="M1.8 3.5 V14 Q1.8 15.8 3.6 15.8 H10" fill="none" stroke="#6e6e6e" stroke-width="1.3"/><rect x="1.8" y="3.2" width="14.7" height="2.6" fill="#f5a040"/><rect x="4.8" y="0.6" width="1.3" height="2.6" fill="#6e6e6e"/><rect x="12.8" y="0.6" width="1.3" height="2.6" fill="#6e6e6e"/><path d="M6 11 L8 13 L12 8.6" fill="none" stroke="#4caf50" stroke-width="1.5"/><path d="M14.7 10.4 V16.3 M11.8 13.3 H17.6" stroke="#4caf50" stroke-width="1.3"/></svg>
<svg style="left:1416px;top:260px;" width="10" height="10" viewBox="0 0 10 10"><rect x="0.5" y="0.5" width="8.5" height="8.5" fill="url(#bxg)" stroke="#8f8f8f" stroke-width="1"/><path d="M2.3 4.75 H7.2" stroke="#2b3f8f" stroke-width="1.2"/><path d="M4.75 2.3 V7.2" stroke="#2b3f8f" stroke-width="1.2"/></svg>
<svg style="left:1434px;top:255px;" width="16" height="16" viewBox="0 0 16 16"><rect x="0.5" y="0.5" width="15" height="15.3" rx="1.5" fill="#e00000" stroke="#b00000" stroke-width="1"/><text x="8" y="13.3" text-anchor="middle" font-family="Liberation Sans" font-weight="bold" font-size="14" fill="#fff">1</text></svg>
<div class="t" style="letter-spacing:-0.041px;left:1454px;top:258.05px;line-height:1;font-size:11px;font-weight:normal;color:#000;font-family:'Liberation Sans',sans-serif;">Priorité 1 (2)</div>
<svg style="left:1416px;top:278px;" width="10" height="10" viewBox="0 0 10 10"><rect x="0.5" y="0.5" width="8.5" height="8.5" fill="url(#bxg)" stroke="#8f8f8f" stroke-width="1"/><path d="M2.3 4.75 H7.2" stroke="#2b3f8f" stroke-width="1.2"/><path d="M4.75 2.3 V7.2" stroke="#2b3f8f" stroke-width="1.2"/></svg>
<svg style="left:1434px;top:273px;" width="16" height="16" viewBox="0 0 16 16"><rect x="0.5" y="0.5" width="15" height="15.3" rx="1.5" fill="#10a5f5" stroke="#0a85d0" stroke-width="1"/><text x="8" y="13.3" text-anchor="middle" font-family="Liberation Sans" font-weight="bold" font-size="14" fill="#fff">2</text></svg>
<div class="t" style="letter-spacing:-0.041px;left:1454px;top:276.05px;line-height:1;font-size:11px;font-weight:normal;color:#000;font-family:'Liberation Sans',sans-serif;">Priorité 2 (2)</div>
<svg style="left:1434px;top:291px;" width="16" height="16" viewBox="0 0 16 16"><rect x="0.5" y="0.5" width="15" height="15.3" rx="1.5" fill="#6cc01a" stroke="#55a010" stroke-width="1"/><text x="8" y="13.3" text-anchor="middle" font-family="Liberation Sans" font-weight="bold" font-size="14" fill="#fff">3</text></svg>
<div class="t" style="letter-spacing:-0.003px;left:1454px;top:294.05px;line-height:1;font-size:11px;font-weight:normal;color:#000;font-family:'Liberation Sans',sans-serif;">Priorité 3</div>
<svg style="left:1434px;top:309px;" width="16" height="16" viewBox="0 0 16 16"><rect x="0.5" y="0.5" width="15" height="15.3" rx="1.5" fill="#ffb400" stroke="#e09000" stroke-width="1"/><text x="8" y="13.3" text-anchor="middle" font-family="Liberation Sans" font-weight="bold" font-size="14" fill="#fff">4</text></svg>
<div class="t" style="letter-spacing:-0.003px;left:1454px;top:312.05px;line-height:1;font-size:11px;font-weight:normal;color:#000;font-family:'Liberation Sans',sans-serif;">Priorité 4</div>
<svg style="left:1434px;top:327px;" width="16" height="16" viewBox="0 0 16 16"><rect x="0.5" y="0.5" width="15" height="15.3" rx="1.5" fill="#8f55f0" stroke="#7040d0" stroke-width="1"/><text x="8" y="13.3" text-anchor="middle" font-family="Liberation Sans" font-weight="bold" font-size="14" fill="#fff">5</text></svg>
<div class="t" style="letter-spacing:-0.003px;left:1454px;top:330.05px;line-height:1;font-size:11px;font-weight:normal;color:#000;font-family:'Liberation Sans',sans-serif;">Priorité 5</div>
<svg style="left:1434px;top:345px;" width="16" height="16" viewBox="0 0 16 16"><rect x="0.5" y="0.5" width="15" height="15.3" rx="1.5" fill="#707070" stroke="#555" stroke-width="1"/><text x="8" y="13.3" text-anchor="middle" font-family="Liberation Sans" font-weight="bold" font-size="14" fill="#fff">6</text></svg>
<div class="t" style="letter-spacing:-0.003px;left:1454px;top:348.05px;line-height:1;font-size:11px;font-weight:normal;color:#000;font-family:'Liberation Sans',sans-serif;">Priorité 6</div>
<svg style="left:1434px;top:363px;" width="16" height="16" viewBox="0 0 16 16"><rect x="0.5" y="0.5" width="15" height="15.3" rx="1.5" fill="#707070" stroke="#555" stroke-width="1"/><text x="8" y="13.3" text-anchor="middle" font-family="Liberation Sans" font-weight="bold" font-size="14" fill="#fff">7</text></svg>
<div class="t" style="letter-spacing:-0.003px;left:1454px;top:366.05px;line-height:1;font-size:11px;font-weight:normal;color:#000;font-family:'Liberation Sans',sans-serif;">Priorité 7</div>
<svg style="left:1434px;top:381px;" width="16" height="16" viewBox="0 0 16 16"><rect x="0.5" y="0.5" width="15" height="15.3" rx="1.5" fill="#707070" stroke="#555" stroke-width="1"/><text x="8" y="13.3" text-anchor="middle" font-family="Liberation Sans" font-weight="bold" font-size="14" fill="#fff">8</text></svg>
<div class="t" style="letter-spacing:-0.003px;left:1454px;top:384.05px;line-height:1;font-size:11px;font-weight:normal;color:#000;font-family:'Liberation Sans',sans-serif;">Priorité 8</div>
<svg style="left:1434px;top:399px;" width="16" height="16" viewBox="0 0 16 16"><rect x="0.5" y="0.5" width="15" height="15.3" rx="1.5" fill="#707070" stroke="#555" stroke-width="1"/><text x="8" y="13.3" text-anchor="middle" font-family="Liberation Sans" font-weight="bold" font-size="14" fill="#fff">9</text></svg>
<div class="t" style="letter-spacing:-0.164px;left:1454px;top:402.05px;line-height:1;font-size:11px;font-weight:normal;color:#000;font-family:'Liberation Sans',sans-serif;">Prioriété 9</div>
<svg style="left:1395px;top:421.5px;" width="10" height="10" viewBox="0 0 10 10"><rect x="0.5" y="0.5" width="8.5" height="8.5" fill="url(#bxg)" stroke="#8f8f8f" stroke-width="1"/><path d="M2.3 4.75 H7.2" stroke="#2b3f8f" stroke-width="1.2"/></svg>
<div class="a" style="left:1411px;top:425px;width:22px;height:1px;background:#d6d6d6;"></div>
<div class="a" style="left:1524px;top:425px;width:331px;height:1px;background:#d6d6d6;"></div>
<div class="t" style="letter-spacing:-0.074px;left:1434px;top:418.80px;line-height:1;font-size:12px;font-weight:bold;color:#0b64c8;font-family:'Liberation Sans',sans-serif;">Progression (8)</div>
<svg style="left:1859px;top:416.7px;" width="18" height="18" viewBox="0 0 18 18"><path d="M1.8 3.5 H16.5 V9.8" fill="none" stroke="#6e6e6e" stroke-width="1.3"/><path d="M1.8 3.5 V14 Q1.8 15.8 3.6 15.8 H10" fill="none" stroke="#6e6e6e" stroke-width="1.3"/><rect x="1.8" y="3.2" width="14.7" height="2.6" fill="#f5a040"/><rect x="4.8" y="0.6" width="1.3" height="2.6" fill="#6e6e6e"/><rect x="12.8" y="0.6" width="1.3" height="2.6" fill="#6e6e6e"/><path d="M6 11 L8 13 L12 8.6" fill="none" stroke="#4caf50" stroke-width="1.5"/><path d="M14.7 10.4 V16.3 M11.8 13.3 H17.6" stroke="#4caf50" stroke-width="1.3"/></svg>
<svg style="left:1416px;top:440px;" width="10" height="10" viewBox="0 0 10 10"><rect x="0.5" y="0.5" width="8.5" height="8.5" fill="url(#bxg)" stroke="#8f8f8f" stroke-width="1"/><path d="M2.3 4.75 H7.2" stroke="#2b3f8f" stroke-width="1.2"/><path d="M4.75 2.3 V7.2" stroke="#2b3f8f" stroke-width="1.2"/></svg>
<svg style="left:1434px;top:435px;" width="16" height="16" viewBox="0 0 16 16"><circle cx="8" cy="8" r="7" fill="#fff" stroke="#3a7fd5" stroke-width="1.5"/></svg>
<div class="t" style="letter-spacing:-0.303px;left:1454px;top:438.05px;line-height:1;font-size:11px;font-weight:normal;color:#000;font-family:'Liberation Sans',sans-serif;text-decoration:underline;">Non commencé (4)</div>
<svg style="left:1416px;top:458px;" width="10" height="10" viewBox="0 0 10 10"><rect x="0.5" y="0.5" width="8.5" height="8.5" fill="url(#bxg)" stroke="#8f8f8f" stroke-width="1"/><path d="M2.3 4.75 H7.2" stroke="#2b3f8f" stroke-width="1.2"/><path d="M4.75 2.3 V7.2" stroke="#2b3f8f" stroke-width="1.2"/></svg>
<svg style="left:1434px;top:453px;" width="16" height="16" viewBox="0 0 16 16"><circle cx="8" cy="8" r="7" fill="#fff" stroke="#3a7fd5" stroke-width="1.5"/><path d="M8 8 V1 A7 7 0 0 1 15.00 8.00 Z" fill="#4a9af0" stroke="#3a7fd5" stroke-width="1"/></svg>
<div class="t" style="letter-spacing:0.104px;left:1454px;top:456.05px;line-height:1;font-size:11px;font-weight:normal;color:#000;font-family:'Liberation Sans',sans-serif;">Achevé à 25% (1)</div>
<svg style="left:1434px;top:471px;" width="16" height="16" viewBox="0 0 16 16"><circle cx="8" cy="8" r="7" fill="#fff" stroke="#3a7fd5" stroke-width="1.5"/><path d="M8 8 V1 A7 7 0 0 1 8.00 15.00 Z" fill="#4a9af0" stroke="#3a7fd5" stroke-width="1"/></svg>
<div class="t" style="letter-spacing:0.078px;left:1454px;top:474.05px;line-height:1;font-size:11px;font-weight:normal;color:#000;font-family:'Liberation Sans',sans-serif;">Achevé à 50%</div>
<svg style="left:1434px;top:489px;" width="16" height="16" viewBox="0 0 16 16"><circle cx="8" cy="8" r="7" fill="#fff" stroke="#3a7fd5" stroke-width="1.5"/><path d="M8 8 V1 A7 7 0 1 1 1.00 8.00 Z" fill="#4a9af0" stroke="#3a7fd5" stroke-width="1"/></svg>
<div class="t" style="letter-spacing:-0.015px;left:1454px;top:492.05px;line-height:1;font-size:11px;font-weight:normal;color:#000;font-family:'Liberation Sans',sans-serif;">A présenter en réunion</div>
<svg style="left:1416px;top:512px;" width="10" height="10" viewBox="0 0 10 10"><rect x="0.5" y="0.5" width="8.5" height="8.5" fill="url(#bxg)" stroke="#8f8f8f" stroke-width="1"/><path d="M2.3 4.75 H7.2" stroke="#2b3f8f" stroke-width="1.2"/><path d="M4.75 2.3 V7.2" stroke="#2b3f8f" stroke-width="1.2"/></svg>
<svg style="left:1434px;top:507px;" width="16" height="16" viewBox="0 0 16 16"><circle cx="8" cy="8" r="7.8" fill="#2fa81c"/><path d="M4.2 8.3 L7 11 L12 5.5" fill="none" stroke="#fff" stroke-width="2.2"/></svg>
<div class="t" style="letter-spacing:-0.107px;left:1454px;top:510.05px;line-height:1;font-size:11px;font-weight:normal;color:#000;font-family:'Liberation Sans',sans-serif;">Tâche achevée (1)</div>
<svg style="left:1416px;top:530px;" width="10" height="10" viewBox="0 0 10 10"><rect x="0.5" y="0.5" width="8.5" height="8.5" fill="url(#bxg)" stroke="#8f8f8f" stroke-width="1"/><path d="M2.3 4.75 H7.2" stroke="#2b3f8f" stroke-width="1.2"/><path d="M4.75 2.3 V7.2" stroke="#2b3f8f" stroke-width="1.2"/></svg>
<svg style="left:1434px;top:525px;" width="16" height="16" viewBox="0 0 16 16"><circle cx="8" cy="8" r="7" fill="#fff" stroke="#3a7fd5" stroke-width="1.5"/><path d="M8 8 V1 A7 7 0 0 1 12.95 3.05 Z" fill="#4a9af0" stroke="#3a7fd5" stroke-width="1"/></svg>
<div class="t" style="letter-spacing:-0.120px;left:1454px;top:528.05px;line-height:1;font-size:11px;font-weight:normal;color:#808080;font-family:'Liberation Sans',sans-serif;">Nom de marqueur (2)</div>
<svg style="left:1395px;top:547.5px;" width="10" height="10" viewBox="0 0 10 10"><rect x="0.5" y="0.5" width="8.5" height="8.5" fill="url(#bxg)" stroke="#8f8f8f" stroke-width="1"/><path d="M2.3 4.75 H7.2" stroke="#2b3f8f" stroke-width="1.2"/><path d="M4.75 2.3 V7.2" stroke="#2b3f8f" stroke-width="1.2"/></svg>
<div class="a" style="left:1411px;top:551px;width:22px;height:1px;background:#d6d6d6;"></div>
<div class="a" style="left:1521.5px;top:551px;width:333.5px;height:1px;background:#d6d6d6;"></div>
<div class="t" style="letter-spacing:-0.119px;left:1434px;top:544.80px;line-height:1;font-size:12px;font-weight:bold;color:#0b64c8;font-family:'Liberation Sans',sans-serif;">Ressources (5)</div>
<svg style="left:1859px;top:542.7px;" width="18" height="18" viewBox="0 0 18 18"><path d="M1.8 3.5 H16.5 V9.8" fill="none" stroke="#6e6e6e" stroke-width="1.3"/><path d="M1.8 3.5 V14 Q1.8 15.8 3.6 15.8 H10" fill="none" stroke="#6e6e6e" stroke-width="1.3"/><rect x="1.8" y="3.2" width="14.7" height="2.6" fill="#f5a040"/><rect x="4.8" y="0.6" width="1.3" height="2.6" fill="#6e6e6e"/><rect x="12.8" y="0.6" width="1.3" height="2.6" fill="#6e6e6e"/><path d="M6 11 L8 13 L12 8.6" fill="none" stroke="#4caf50" stroke-width="1.5"/><path d="M14.7 10.4 V16.3 M11.8 13.3 H17.6" stroke="#4caf50" stroke-width="1.3"/></svg>
<div class="a" style="left:1411px;top:569px;width:22px;height:1px;background:#d6d6d6;"></div>
<div class="a" style="left:1535px;top:569px;width:320px;height:1px;background:#d6d6d6;"></div>
<div class="t" style="letter-spacing:-0.213px;left:1434px;top:562.80px;line-height:1;font-size:12px;font-weight:bold;color:#0b64c8;font-family:'Liberation Sans',sans-serif;">Balises générales</div>
<svg style="left:1859px;top:560.7px;" width="18" height="18" viewBox="0 0 18 18"><path d="M10.4 0.2 H16.8 V7 L7.4 15.8 L1 9.2 Z" fill="#3f86d3"/><path d="M11.2 1.8 H15.3 V6.4 L7.4 13.6 L3.2 9.2 Z" fill="#74b2ee"/><rect x="4.8" y="8.6" width="6" height="3.6" fill="#fff" transform="rotate(-42 7.8 10.4)"/><circle cx="13.2" cy="3.6" r="1.5" fill="#fff"/></svg>
<div class="a" style="left:1411px;top:587px;width:22px;height:1px;background:#d6d6d6;"></div>
<div class="a" style="left:1498px;top:587px;width:357px;height:1px;background:#d6d6d6;"></div>
<div class="t" style="letter-spacing:-0.115px;left:1434px;top:580.80px;line-height:1;font-size:12px;font-weight:bold;color:#0b64c8;font-family:'Liberation Sans',sans-serif;">Catégories</div>
<svg style="left:1859px;top:578.7px;" width="18" height="18" viewBox="0 0 18 18"><path d="M10.4 0.2 H16.8 V7 L7.4 15.8 L1 9.2 Z" fill="#3f86d3"/><path d="M11.2 1.8 H15.3 V6.4 L7.4 13.6 L3.2 9.2 Z" fill="#74b2ee"/><rect x="4.8" y="8.6" width="6" height="3.6" fill="#fff" transform="rotate(-42 7.8 10.4)"/><circle cx="13.2" cy="3.6" r="1.5" fill="#fff"/></svg>
<div class="a" style="left:1411px;top:605px;width:22px;height:1px;background:#d6d6d6;"></div>
<div class="a" style="left:1478px;top:605px;width:377px;height:1px;background:#d6d6d6;"></div>
<div class="t" style="letter-spacing:-0.284px;left:1434px;top:598.80px;line-height:1;font-size:12px;font-weight:bold;color:#0b64c8;font-family:'Liberation Sans',sans-serif;">Service</div>
<svg style="left:1859px;top:596.7px;" width="18" height="18" viewBox="0 0 18 18"><path d="M10.4 0.2 H16.8 V7 L7.4 15.8 L1 9.2 Z" fill="#3f86d3"/><path d="M11.2 1.8 H15.3 V6.4 L7.4 13.6 L3.2 9.2 Z" fill="#74b2ee"/><rect x="4.8" y="8.6" width="6" height="3.6" fill="#fff" transform="rotate(-42 7.8 10.4)"/><circle cx="13.2" cy="3.6" r="1.5" fill="#fff"/></svg>
<svg style="left:1395px;top:619.5px;" width="10" height="10" viewBox="0 0 10 10"><rect x="0.5" y="0.5" width="8.5" height="8.5" fill="url(#bxg)" stroke="#8f8f8f" stroke-width="1"/><path d="M2.3 4.75 H7.2" stroke="#2b3f8f" stroke-width="1.2"/><path d="M4.75 2.3 V7.2" stroke="#2b3f8f" stroke-width="1.2"/></svg>
<div class="a" style="left:1411px;top:623px;width:22px;height:1px;background:#d6d6d6;"></div>
<div class="a" style="left:1502px;top:623px;width:353px;height:1px;background:#d6d6d6;"></div>
<div class="t" style="letter-spacing:-0.335px;left:1434px;top:616.80px;line-height:1;font-size:12px;font-weight:bold;color:#0b64c8;font-family:'Liberation Sans',sans-serif;">Émoticônes</div>
<svg style="left:1859px;top:614.7px;" width="18" height="18" viewBox="0 0 18 18"><rect x="1" y="0.8" width="9" height="9" rx="1.2" fill="#c0392b"/><text x="5.3" y="8.3" text-anchor="middle" font-family="Liberation Sans" font-weight="bold" font-size="8" fill="#fff">1</text><circle cx="11" cy="11" r="5.8" fill="#6aaf5a" stroke="#fff" stroke-width="0.8"/><path d="M8.3 11 L10.3 13 L13.5 9.3" fill="none" stroke="#fff" stroke-width="1.5"/></svg>
<svg style="left:1395px;top:637.5px;" width="10" height="10" viewBox="0 0 10 10"><rect x="0.5" y="0.5" width="8.5" height="8.5" fill="url(#bxg)" stroke="#8f8f8f" stroke-width="1"/><path d="M2.3 4.75 H7.2" stroke="#2b3f8f" stroke-width="1.2"/><path d="M4.75 2.3 V7.2" stroke="#2b3f8f" stroke-width="1.2"/></svg>
<div class="a" style="left:1411px;top:641px;width:22px;height:1px;background:#d6d6d6;"></div>
<div class="a" style="left:1479px;top:641px;width:376px;height:1px;background:#d6d6d6;"></div>
<div class="t" style="letter-spacing:-0.451px;left:1434px;top:634.80px;line-height:1;font-size:12px;font-weight:bold;color:#0b64c8;font-family:'Liberation Sans',sans-serif;">Flèches</div>
<svg style="left:1859px;top:632.7px;" width="18" height="18" viewBox="0 0 18 18"><rect x="1" y="0.8" width="9" height="9" rx="1.2" fill="#c0392b"/><text x="5.3" y="8.3" text-anchor="middle" font-family="Liberation Sans" font-weight="bold" font-size="8" fill="#fff">1</text><circle cx="11" cy="11" r="5.8" fill="#6aaf5a" stroke="#fff" stroke-width="0.8"/><path d="M8.3 11 L10.3 13 L13.5 9.3" fill="none" stroke="#fff" stroke-width="1.5"/></svg>
<svg style="left:1395px;top:655.5px;" width="10" height="10" viewBox="0 0 10 10"><rect x="0.5" y="0.5" width="8.5" height="8.5" fill="url(#bxg)" stroke="#8f8f8f" stroke-width="1"/><path d="M2.3 4.75 H7.2" stroke="#2b3f8f" stroke-width="1.2"/><path d="M4.75 2.3 V7.2" stroke="#2b3f8f" stroke-width="1.2"/></svg>
<div class="a" style="left:1411px;top:659px;width:22px;height:1px;background:#d6d6d6;"></div>
<div class="a" style="left:1502px;top:659px;width:353px;height:1px;background:#d6d6d6;"></div>
<div class="t" style="letter-spacing:0.097px;left:1434px;top:652.80px;line-height:1;font-size:12px;font-weight:bold;color:#0b64c8;font-family:'Liberation Sans',sans-serif;">Indicateurs</div>
<svg style="left:1859px;top:650.7px;" width="18" height="18" viewBox="0 0 18 18"><rect x="1" y="0.8" width="9" height="9" rx="1.2" fill="#c0392b"/><text x="5.3" y="8.3" text-anchor="middle" font-family="Liberation Sans" font-weight="bold" font-size="8" fill="#fff">1</text><circle cx="11" cy="11" r="5.8" fill="#6aaf5a" stroke="#fff" stroke-width="0.8"/><path d="M8.3 11 L10.3 13 L13.5 9.3" fill="none" stroke="#fff" stroke-width="1.5"/></svg>
<svg style="left:1395px;top:673.5px;" width="10" height="10" viewBox="0 0 10 10"><rect x="0.5" y="0.5" width="8.5" height="8.5" fill="url(#bxg)" stroke="#8f8f8f" stroke-width="1"/><path d="M2.3 4.75 H7.2" stroke="#2b3f8f" stroke-width="1.2"/><path d="M4.75 2.3 V7.2" stroke="#2b3f8f" stroke-width="1.2"/></svg>
<div class="a" style="left:1411px;top:677px;width:22px;height:1px;background:#d6d6d6;"></div>
<div class="a" style="left:1510px;top:677px;width:345px;height:1px;background:#d6d6d6;"></div>
<div class="t" style="letter-spacing:-0.092px;left:1434px;top:670.80px;line-height:1;font-size:12px;font-weight:bold;color:#0b64c8;font-family:'Liberation Sans',sans-serif;">Icone unique</div>
<svg style="left:1859px;top:668.7px;" width="18" height="18" viewBox="0 0 18 18"><rect x="1" y="0.8" width="9" height="9" rx="1.2" fill="#c0392b"/><text x="5.3" y="8.3" text-anchor="middle" font-family="Liberation Sans" font-weight="bold" font-size="8" fill="#fff">1</text><circle cx="11" cy="11" r="5.8" fill="#6aaf5a" stroke="#fff" stroke-width="0.8"/><path d="M8.3 11 L10.3 13 L13.5 9.3" fill="none" stroke="#fff" stroke-width="1.5"/></svg>
<svg style="left:1395px;top:691.5px;" width="10" height="10" viewBox="0 0 10 10"><rect x="0.5" y="0.5" width="8.5" height="8.5" fill="url(#bxg)" stroke="#8f8f8f" stroke-width="1"/><path d="M2.3 4.75 H7.2" stroke="#2b3f8f" stroke-width="1.2"/><path d="M4.75 2.3 V7.2" stroke="#2b3f8f" stroke-width="1.2"/></svg>
<div class="a" style="left:1411px;top:695px;width:22px;height:1px;background:#d6d6d6;"></div>
<div class="a" style="left:1524px;top:695px;width:331px;height:1px;background:#d6d6d6;"></div>
<div class="t" style="letter-spacing:0.065px;left:1434px;top:688.80px;line-height:1;font-size:12px;font-weight:bold;color:#0b64c8;font-family:'Liberation Sans',sans-serif;">Périodicité (14)</div>
<svg style="left:1859px;top:686.7px;" width="18" height="18" viewBox="0 0 18 18"><path d="M16 1 L7.5 10" stroke="#4a8fd8" stroke-width="1.8"/><path d="M7.5 9 L9 10.5 L5.5 15.5 Q3 17.5 1 17 Q1.5 14.5 3 12 Z" fill="#e8a33a"/><path d="M6.5 10 L8 11.5" stroke="#888" stroke-width="1.5"/></svg>
<svg style="left:1395px;top:709.5px;" width="10" height="10" viewBox="0 0 10 10"><rect x="0.5" y="0.5" width="8.5" height="8.5" fill="url(#bxg)" stroke="#8f8f8f" stroke-width="1"/><path d="M2.3 4.75 H7.2" stroke="#2b3f8f" stroke-width="1.2"/><path d="M4.75 2.3 V7.2" stroke="#2b3f8f" stroke-width="1.2"/></svg>
<div class="a" style="left:1411px;top:713px;width:22px;height:1px;background:#d6d6d6;"></div>
<div class="a" style="left:1558.8px;top:713px;width:296.20000000000005px;height:1px;background:#d6d6d6;"></div>
<div class="t" style="letter-spacing:-0.169px;left:1434px;top:706.80px;line-height:1;font-size:12px;font-weight:bold;color:#0b64c8;font-family:'Liberation Sans',sans-serif;">Couleurs de police (1)</div>
<svg style="left:1859px;top:704.7px;" width="18" height="18" viewBox="0 0 18 18"><path d="M16 1 L7.5 10" stroke="#4a8fd8" stroke-width="1.8"/><path d="M7.5 9 L9 10.5 L5.5 15.5 Q3 17.5 1 17 Q1.5 14.5 3 12 Z" fill="#e8a33a"/><path d="M6.5 10 L8 11.5" stroke="#888" stroke-width="1.5"/></svg>
<div class="a" style="left:1887px;top:161px;width:32px;height:895px;background:#e9e9e9;"></div>
<div class="a" style="left:1887px;top:161px;width:1px;height:895px;background:#a9a9a9;"></div>
<svg style="left:1887px;top:175.5px;" width="29" height="31" viewBox="0 0 29 31"><path d="M0.5 0.5 H24 L28.5 5 V30.5 H0.5" fill="#e3e3e3" stroke="#b5b5b5" stroke-width="1"/></svg>
<svg style="left:1893px;top:182.0px;" width="18" height="18" viewBox="0 0 18 18"><rect x="1" y="3" width="15" height="12" fill="#fff" stroke="#333" stroke-width="1.2"/><path d="M1 3 V1.5 H6 L7 3" fill="none" stroke="#333" stroke-width="1.2"/><rect x="2" y="6" width="13" height="8.5" fill="#2f50b0"/><path d="M5.5 7.5 H9 L9.5 9 V13 H5.5 Z" fill="#fff"/><rect x="10.5" y="7.5" width="2" height="5.5" fill="#aaa"/></svg>
<svg style="left:1887px;top:205.6px;" width="29" height="31" viewBox="0 0 29 31"><path d="M0.5 0.5 H24 L28.5 5 V30.5 H0.5" fill="#f7f7f7" stroke="#b5b5b5" stroke-width="1"/><path d="M0.5 1 V30" stroke="#f7f7f7" stroke-width="1.5"/></svg>
<svg style="left:1893px;top:212.1px;" width="18" height="18" viewBox="0 0 18 18"><rect x="1" y="0.8" width="9" height="9" rx="1.2" fill="#c0392b"/><text x="5.3" y="8.3" text-anchor="middle" font-family="Liberation Sans" font-weight="bold" font-size="8" fill="#fff">1</text><circle cx="11" cy="11" r="5.8" fill="#6aaf5a" stroke="#fff" stroke-width="0.8"/><path d="M8.3 11 L10.3 13 L13.5 9.3" fill="none" stroke="#fff" stroke-width="1.5"/></svg>
<svg style="left:1887px;top:235.7px;" width="29" height="31" viewBox="0 0 29 31"><path d="M0.5 0.5 H24 L28.5 5 V30.5 H0.5" fill="#e3e3e3" stroke="#b5b5b5" stroke-width="1"/></svg>
<svg style="left:1893px;top:242.2px;" width="18" height="18" viewBox="0 0 18 18"><path d="M1.8 3.5 H16.5 V9.8" fill="none" stroke="#6e6e6e" stroke-width="1.3"/><path d="M1.8 3.5 V14 Q1.8 15.8 3.6 15.8 H10" fill="none" stroke="#6e6e6e" stroke-width="1.3"/><rect x="1.8" y="3.2" width="14.7" height="2.6" fill="#f5a040"/><rect x="4.8" y="0.6" width="1.3" height="2.6" fill="#6e6e6e"/><rect x="12.8" y="0.6" width="1.3" height="2.6" fill="#6e6e6e"/><path d="M6 11 L8 13 L12 8.6" fill="none" stroke="#4caf50" stroke-width="1.5"/><path d="M14.7 10.4 V16.3 M11.8 13.3 H17.6" stroke="#4caf50" stroke-width="1.3"/></svg>
<svg style="left:1887px;top:265.8px;" width="29" height="31" viewBox="0 0 29 31"><path d="M0.5 0.5 H24 L28.5 5 V30.5 H0.5" fill="#e3e3e3" stroke="#b5b5b5" stroke-width="1"/></svg>
<svg style="left:1893px;top:272.3px;" width="18" height="18" viewBox="0 0 18 18"><circle cx="8.5" cy="4" r="2.3" fill="#bbb" stroke="#777" stroke-width="1"/><path d="M2 16 Q2 7 8.5 7 Q15 7 15 16 Z" fill="none" stroke="#777" stroke-width="1.3"/></svg>
<svg style="left:1887px;top:295.9px;" width="29" height="31" viewBox="0 0 29 31"><path d="M0.5 0.5 H24 L28.5 5 V30.5 H0.5" fill="#e3e3e3" stroke="#b5b5b5" stroke-width="1"/></svg>
<svg style="left:1893px;top:302.4px;" width="18" height="18" viewBox="0 0 18 18"><rect x="1" y="6" width="5.5" height="4" rx="2" fill="#fff" stroke="#777" stroke-width="1"/><rect x="9.5" y="1.5" width="6" height="3.5" rx="1.7" fill="#fff" stroke="#777" stroke-width="1"/><rect x="9.5" y="7" width="6" height="3.5" rx="1.7" fill="#fff" stroke="#777" stroke-width="1"/><path d="M6.5 8 H8 V3.3 H9.5 M8 8.8 H9.5 M6.5 8 L8 12 H9" fill="none" stroke="#777" stroke-width="1"/><path d="M13 11 V17 M10 14 H16" stroke="#4caf50" stroke-width="1.3"/></svg>
<svg style="left:1887px;top:326.0px;" width="29" height="31" viewBox="0 0 29 31"><path d="M0.5 0.5 H24 L28.5 5 V30.5 H0.5" fill="#e3e3e3" stroke="#b5b5b5" stroke-width="1"/></svg>
<svg style="left:1893px;top:332.5px;" width="18" height="18" viewBox="0 0 18 18"><rect x="1" y="1.5" width="11" height="11" fill="#5b9be0" stroke="#3f7ed0" stroke-width="1"/><path d="M1.5 12 L5.5 6.5 L9 12 Z" fill="#ddd" stroke="#666" stroke-width="0.8"/><circle cx="9" cy="4" r="1.2" fill="#f0b050"/><path d="M12.5 3 Q14.5 3 14.5 5 V11" fill="none" stroke="#777" stroke-width="1"/><path d="M13 11.5 V17 M10.3 14.3 H15.7" stroke="#4caf50" stroke-width="1.3"/></svg>
<svg style="left:1887px;top:356.1px;" width="29" height="31" viewBox="0 0 29 31"><path d="M0.5 0.5 H24 L28.5 5 V30.5 H0.5" fill="#e3e3e3" stroke="#b5b5b5" stroke-width="1"/></svg>
<svg style="left:1893px;top:362.6px;" width="18" height="18" viewBox="0 0 18 18"><circle cx="7" cy="7" r="5" fill="none" stroke="#555" stroke-width="1.6"/><path d="M10.5 10.5 L15 15" stroke="#555" stroke-width="2.2"/></svg>
<svg style="left:1887px;top:386.20000000000005px;" width="29" height="31" viewBox="0 0 29 31"><path d="M0.5 0.5 H24 L28.5 5 V30.5 H0.5" fill="#e3e3e3" stroke="#b5b5b5" stroke-width="1"/></svg>
<svg style="left:1893px;top:392.70000000000005px;" width="18" height="18" viewBox="0 0 18 18"><rect x="1" y="1" width="15" height="15" rx="1.5" fill="#2f50b0"/><path d="M3 5 V3 H5 M12 3 H14 V5 M14 12 V14 H12 M5 14 H3 V12" fill="none" stroke="#fff" stroke-width="1"/><path d="M6 5 H9.5 L10 6.5 V12 H6 Z" fill="#fff"/><rect x="10.5" y="5.5" width="1.5" height="6" fill="#aaa"/></svg>
<svg style="left:1887px;top:416.3px;" width="29" height="31" viewBox="0 0 29 31"><path d="M0.5 0.5 H24 L28.5 5 V30.5 H0.5" fill="#e3e3e3" stroke="#b5b5b5" stroke-width="1"/></svg>
<svg style="left:1893px;top:422.8px;" width="18" height="18" viewBox="0 0 18 18"><rect x="1" y="1" width="9.5" height="7.5" rx="1" fill="#fff" stroke="#777" stroke-width="1"/><rect x="5" y="5" width="11.5" height="9" rx="1.5" fill="#fff" stroke="#3f7ed0" stroke-width="1.3"/><rect x="8" y="9" width="5.5" height="1.5" fill="#3f7ed0"/></svg>
<svg style="left:1887px;top:446.40000000000003px;" width="29" height="31" viewBox="0 0 29 31"><path d="M0.5 0.5 H24 L28.5 5 V30.5 H0.5" fill="#e3e3e3" stroke="#b5b5b5" stroke-width="1"/></svg>
<svg style="left:1893px;top:452.90000000000003px;" width="18" height="18" viewBox="0 0 18 18"><path d="M1 3 L9.5 1 V16 L1 14 Z" fill="#0b64c8"/><rect x="8" y="5" width="8.5" height="7" fill="#fff" stroke="#0b64c8" stroke-width="1"/><path d="M8.5 5.5 L12.2 8.5 L16 5.5" fill="none" stroke="#0b64c8" stroke-width="0.9"/><ellipse cx="5" cy="8.5" rx="2" ry="2.8" fill="none" stroke="#fff" stroke-width="1.2"/></svg>
<svg style="left:1887px;top:476.5px;" width="29" height="31" viewBox="0 0 29 31"><path d="M0.5 0.5 H24 L28.5 5 V30.5 H0.5" fill="#e3e3e3" stroke="#b5b5b5" stroke-width="1"/></svg>
<svg style="left:1893px;top:483.0px;" width="18" height="18" viewBox="0 0 18 18"><circle cx="8.5" cy="8.5" r="7.3" fill="#9a9a9a" stroke="#777" stroke-width="1"/><path d="M1.5 8.5 H15.5 M8.5 1.2 V15.8 M2.5 5 H14.5 M2.5 12 H14.5" stroke="#ddd" stroke-width="0.9"/><ellipse cx="8.5" cy="8.5" rx="3.3" ry="7.3" fill="none" stroke="#ddd" stroke-width="0.9"/></svg>
<svg style="left:1887px;top:506.6px;" width="29" height="31" viewBox="0 0 29 31"><path d="M0.5 0.5 H24 L28.5 5 V30.5 H0.5" fill="#e3e3e3" stroke="#b5b5b5" stroke-width="1"/></svg>
<svg style="left:1893px;top:513.1px;" width="18" height="18" viewBox="0 0 18 18"><path d="M1 2.5 L10 1 V16 L1 14.5 Z" fill="#2e7d32"/><path d="M3.5 5.5 L7 11.5 M7 5.5 L3.5 11.5" stroke="#fff" stroke-width="1.4"/><path d="M11 3 V14 M13.5 3 V14 M11 5 H16 M11 7.5 H16 M11 10 H16 M11 12.5 H16" stroke="#2e7d32" stroke-width="1" stroke-dasharray="1.2 0.8"/></svg>
<div class="a" style="left:7px;top:1033px;width:1368px;height:23px;background:#e5e5e5;"></div>
<svg style="left:6px;top:1039px;" width="8" height="11" viewBox="0 0 8 11"><path d="M6.5 1 L1.5 5.3 L6.5 9.6 Z" fill="none" stroke="#888" stroke-width="1.2"/></svg>
<svg style="left:17px;top:1032px;" width="214" height="22" viewBox="0 0 214 22"><path d="M1 0.5 H209 Q212.5 0.5 212.5 4 V17 Q212.5 20.5 209 20.5 H23 Z" fill="#fafafa" stroke="#c4c4c4" stroke-width="1"/></svg>
<svg style="left:47px;top:1034px;" width="17" height="18" viewBox="0 0 17 18"><path d="M1.5 1 H12 L15.5 4.5 V17 H1.5 Z" fill="#fff" stroke="#2f50b0" stroke-width="1.4"/><rect x="3" y="5" width="11" height="10.5" fill="#2f50b0"/><path d="M6 7 L9 10 V15.5 H6 Z" fill="#ccc"/><path d="M9 10 L11.5 7 V15.5 H9 Z" fill="#999"/></svg>
<div class="t" style="letter-spacing:-0.492px;left:76px;top:1036.80px;line-height:1;font-size:12px;font-weight:bold;color:#333;font-family:'Liberation Sans',sans-serif;">Evénement &amp; Gantt*</div>
<svg style="left:195px;top:1039px;" width="10" height="10" viewBox="0 0 10 10"><path d="M1 1 H6 M1 1 V6" stroke="#777" stroke-width="1" fill="none"/><path d="M3 3 L8.5 8.5 M5 8.5 H8.5 V5" stroke="#777" stroke-width="1" fill="none"/></svg>
<svg style="left:213px;top:1037px;" width="11" height="11" viewBox="0 0 11 11"><path d="M1.5 1.5 L9.5 9.5 M9.5 1.5 L1.5 9.5" stroke="#555" stroke-width="1.3"/></svg>
<svg style="left:1358px;top:1039px;" width="9" height="11" viewBox="0 0 9 11"><path d="M2 1 L7.5 5.3 L2 9.6 Z" fill="none" stroke="#888" stroke-width="1.2"/></svg>
<div class="a" style="left:0px;top:1056px;width:1920px;height:24px;background:#f0f0f0;"></div>
<div class="a" style="left:0px;top:1056px;width:1920px;height:1px;background:#c9c9c9;"></div>
<div class="a" style="left:0px;top:1079px;width:1920px;height:1px;background:#1a5fd0;"></div>
<div class="a" style="left:0px;top:1056px;width:1px;height:24px;background:#1a5fd0;"></div>
<svg style="left:5px;top:1060px;" width="18" height="18" viewBox="0 0 18 18"><path d="M2 16 L13 5 L15.5 7.5 L4.5 18.5 Z" fill="#bbb" stroke="#666" stroke-width="1"/><path d="M8 12 L11 9" stroke="#3f7ed0" stroke-width="2"/><path d="M13 5 L15 3 L17.5 5.5 L15.5 7.5" fill="#777"/><path d="M16 8 Q17 10 15 12" fill="none" stroke="#555" stroke-width="1"/></svg>
<div class="a" style="left:26px;top:1059px;width:22px;height:18px;background:#c8c8c8;border:1px solid #2b579a"></div>
<svg style="left:30px;top:1060px;" width="14" height="16" viewBox="0 0 14 16"><path d="M7 1.5 Q12 1.5 12 6 V10.5 Q12 15 7 15 Q2 15 2 10.5 V6 Q2 1.5 7 1.5 Z" fill="#fff" stroke="#777" stroke-width="1"/><path d="M7 1.5 Q2 1.5 2 6 V7 H7 Z" fill="#4a8fd8"/><path d="M7 1.5 V7 M2 7 H12" stroke="#777" stroke-width="0.8"/></svg>
<svg style="left:1306px;top:1061px;" width="8" height="16" viewBox="0 0 8 16"><path d="M1 5 L4 1.5 L7 5 Z M1 11 L4 14.5 L7 11 Z" fill="#333"/></svg>
<div class="t" style="letter-spacing:0.125px;left:1319.7px;top:1061.74px;line-height:1;font-size:13.6px;font-weight:bold;color:#1f4e9a;font-family:'Liberation Sans',sans-serif;">00:00:00</div>
<svg style="left:1393px;top:1068px;" width="7" height="4" viewBox="0 0 7 4"><path d="M0 0 H7 L3.5 3.5 Z" fill="#555"/></svg>
<svg style="left:1414px;top:1062px;" width="16" height="15" viewBox="0 0 16 15"><path d="M0.5 1 H15.5 L10 7.5 V14.5 L6 12.5 V7.5 Z" fill="#777"/><path d="M3 2 H9 L7 5" fill="none" stroke="#bbb" stroke-width="1"/></svg>
<svg style="left:1433px;top:1068px;" width="6" height="4" viewBox="0 0 6 4"><path d="M0 0 H6 L3 3 Z" fill="#555"/></svg>
<svg style="left:1445px;top:1062px;" width="18" height="16" viewBox="0 0 18 16"><path d="M0.5 1 H15.5 L10 7.5 V14.5 L6 12.5 V7.5 Z" fill="#777"/><path d="M3 2 H9 L7 5" fill="none" stroke="#bbb" stroke-width="1"/><path d="M12 8 L9.5 12 H12 L10.5 15.5 L15 10.5 H12.5 L14 8 Z" fill="#555"/></svg>
<svg style="left:1465px;top:1068px;" width="6" height="4" viewBox="0 0 6 4"><path d="M0 0 H6 L3 3 Z" fill="#555"/></svg>
<svg style="left:1483px;top:1061px;" width="17" height="17" viewBox="0 0 17 17"><circle cx="8.3" cy="8.8" r="6.8" fill="none" stroke="#777" stroke-width="1.5"/><path d="M8.3 5 V12.6 M4.5 8.8 H12.1" stroke="#777" stroke-width="1.8"/><path d="M3 2 L6 1.5 L5 4.5" fill="#777"/></svg>
<svg style="left:1502px;top:1068px;" width="6" height="4" viewBox="0 0 6 4"><path d="M0 0 H6 L3 3 Z" fill="#555"/></svg>
<svg style="left:1515px;top:1061px;" width="17" height="17" viewBox="0 0 17 17"><rect x="0.7" y="0.7" width="15" height="15" rx="2" fill="none" stroke="#ccc" stroke-width="1.2"/><circle cx="8.2" cy="8.2" r="2" fill="#ccc"/><path d="M3 3 L4.5 4.5 M13.5 3 L12 4.5 M3 13.5 L4.5 12 M13.5 13.5 L12 12" stroke="#ccc" stroke-width="1"/></svg>
<svg style="left:1538px;top:1061px;" width="17" height="17" viewBox="0 0 17 17"><rect x="0.7" y="0.7" width="15" height="15" rx="2" fill="none" stroke="#555" stroke-width="1.3"/><path d="M3.5 4 H11 M3.5 6.5 H8 M3.5 9 H12.5 M3.5 11.5 H9" stroke="#555" stroke-width="1"/></svg>
<svg style="left:1562px;top:1061px;" width="17" height="17" viewBox="0 0 17 17"><rect x="0.7" y="0.7" width="15" height="15" rx="2" fill="#fff" stroke="#555" stroke-width="1.3"/><rect x="0.7" y="0.7" width="15" height="3.5" fill="#555"/><text x="8.2" y="13.5" text-anchor="middle" font-family="Liberation Sans" font-weight="bold" font-size="7.5" fill="#555">24</text></svg>
<svg style="left:1586px;top:1061px;" width="17" height="17" viewBox="0 0 17 17"><rect x="0.7" y="0.7" width="15" height="15" rx="2" fill="none" stroke="#555" stroke-width="1.3"/><rect x="3" y="3" width="6" height="5" rx="1" fill="none" stroke="#555" stroke-width="1.6"/><path d="M7 8 L10 8 Q13 8 13 10.5 Q13 13 10.5 13 L8 13" fill="none" stroke="#555" stroke-width="1.6"/></svg>
<svg style="left:1610px;top:1061px;" width="17" height="17" viewBox="0 0 17 17"><rect x="0.7" y="0.7" width="15" height="15" rx="2" fill="none" stroke="#555" stroke-width="1.3"/><path d="M9 2.5 H13.5 V7 L6.5 14 L2.5 10 Z" fill="#777"/><circle cx="11" cy="5" r="1" fill="#fff"/></svg>
<svg style="left:1635px;top:1061px;" width="17" height="17" viewBox="0 0 17 17"><rect x="0.7" y="0.7" width="15" height="15" rx="2" fill="none" stroke="#555" stroke-width="1.3"/><path d="M2 0.7 V15.7" stroke="#555" stroke-width="1.5" stroke-dasharray="1.5 1"/><path d="M5 4 H13 M5 6.5 H13 M5 9 H9" stroke="#555" stroke-width="1"/><rect x="9.5" y="10.5" width="5.5" height="4.5" fill="#555"/></svg>
<div class="t" style="letter-spacing:-0.652px;left:1662px;top:1062.22px;line-height:1;font-size:11.5px;font-weight:normal;color:#444;font-family:'Liberation Sans',sans-serif;">227 %</div>
<div class="a" style="left:1709px;top:1068px;width:8px;height:2px;background:#999;"></div>
<div class="a" style="left:1727px;top:1068px;width:87px;height:1px;background:#aaa;"></div>
<div class="a" style="left:1786px;top:1061px;width:5px;height:16px;background:#f4f4f4;border:1px solid #999"></div>
<svg style="left:1824px;top:1063px;" width="10" height="10" viewBox="0 0 10 10"><path d="M5 0.5 V9.5 M0.5 5 H9.5" stroke="#999" stroke-width="1.8"/></svg>
<svg style="left:1842px;top:1063px;" width="15" height="14" viewBox="0 0 15 14"><rect x="0.6" y="0.6" width="13.5" height="12.5" fill="none" stroke="#555" stroke-width="1.2"/><path d="M7.3 3 V10.5 M3.5 6.8 H11" stroke="#555" stroke-width="1"/><path d="M5.8 4.5 L7.3 3 L8.8 4.5 M5.8 9 L7.3 10.5 L8.8 9 M5 5.3 L3.5 6.8 L5 8.3 M9.6 5.3 L11 6.8 L9.6 8.3" fill="none" stroke="#555" stroke-width="1"/></svg>
<svg style="left:1872px;top:1063px;" width="15" height="14" viewBox="0 0 15 14"><rect x="0" y="1" width="8" height="13" fill="#666"/><rect x="8.5" y="0.5" width="5" height="13" fill="#fff" stroke="#666" stroke-width="1.2"/><rect x="9.5" y="5" width="3" height="9" fill="#666"/></svg>
<svg style="left:1890px;top:1068px;" width="6" height="4" viewBox="0 0 6 4"><path d="M0 0 H6 L3 3 Z" fill="#555"/></svg>
<svg style="left:1902px;top:1065px;" width="10" height="10" viewBox="0 0 10 10"><g fill="#bbb"><rect x="7" y="1" width="2" height="2"/><rect x="4" y="4" width="2" height="2"/><rect x="7" y="4" width="2" height="2"/><rect x="1" y="7" width="2" height="2"/><rect x="4" y="7" width="2" height="2"/><rect x="7" y="7" width="2" height="2"/></g></svg>
</body></html>
